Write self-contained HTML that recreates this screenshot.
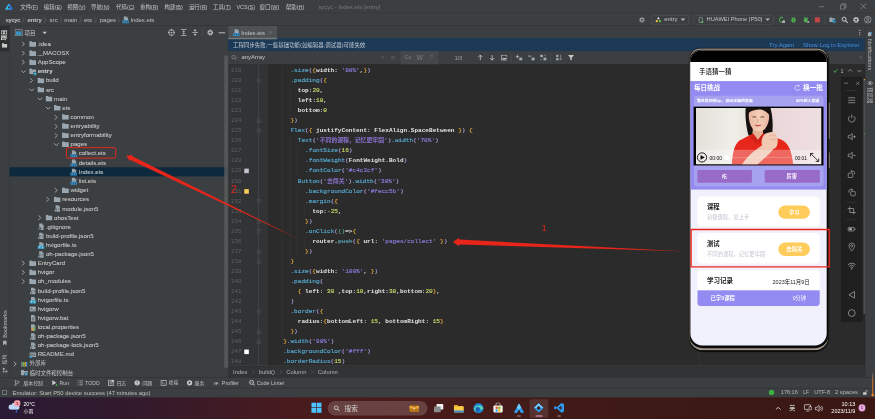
<!DOCTYPE html><html lang="zh"><head><meta charset="utf-8"><title>sycyc - Index.ets [entry]</title><style>
*{box-sizing:border-box;margin:0;padding:0}
html,body{width:875px;height:419px;overflow:hidden;background:#2b2b2b}
body{filter:opacity(1)}
u{text-decoration-thickness:0.7px;text-underline-offset:1.5px}
#root{position:absolute;left:0;top:0;width:1920px;height:920px;transform:scale(0.455729);transform-origin:0 0;
 font-family:"Liberation Sans","Noto Sans CJK SC",sans-serif;font-size:12px;color:#bbbbbb;overflow:hidden;background:#2b2b2b}
.a{position:absolute;white-space:nowrap}
.t{position:absolute;white-space:nowrap;line-height:20px;height:20px}
.mono{font-family:"Liberation Mono","Noto Sans CJK SC",monospace}
.cl{position:absolute;white-space:pre;height:22px;line-height:22px;font-family:"Liberation Mono","Noto Sans CJK SC",monospace;font-size:13.33px;color:#e4e4e4;font-weight:bold}
.cl i{font-style:normal;font-weight:normal;-webkit-text-stroke:0.35px currentColor}
.f{color:#56a8cf}.p{color:#b7a1e0}.b{color:#e0a23a}.s{color:#8d78d8}.n{color:#c3d66a}.o{color:#c8c8c8}
.ln{position:absolute;left:500.5px;width:32px;height:22px;line-height:22px;font-size:12.6px;color:#5f6366;font-family:"Liberation Mono",monospace;text-align:left}
</style></head><body><div id="root">
<div class="a" style="left:0.0px;top:0.0px;width:1920.0px;height:57.1px;background:#3c3f41"></div>
<div class="a" style="left:0.0px;top:56.2px;width:1920.0px;height:1.1px;background:#323232"></div>
<div class="a" style="left:0.0px;top:57.1px;width:501.2px;height:771.3px;background:#3c3f41"></div>
<div class="a" style="left:501.2px;top:57.1px;width:1396.9px;height:29.0px;background:#3c3f41"></div>
<div class="a" style="left:501.2px;top:84.3px;width:1396.9px;height:27.6px;background:#1c3956"></div>
<div class="a" style="left:501.2px;top:111.9px;width:1396.9px;height:29.2px;background:#3c3f41"></div>
<div class="a" style="left:501.2px;top:141.1px;width:1396.9px;height:661.8px;background:#2b2b2b"></div>
<div class="a" style="left:501.2px;top:141.1px;width:86.0px;height:661.8px;background:#313335"></div>
<div class="a" style="left:567.2px;top:141.1px;width:1.1px;height:661.8px;background:#555555"></div>
<div class="a" style="left:586.8px;top:141.1px;width:1.1px;height:661.8px;background:#3a3a3a"></div>
<div class="a" style="left:1533.8px;top:141.1px;width:1.1px;height:661.8px;background:#3e3e3e"></div>
<div class="a" style="left:501.2px;top:802.2px;width:1396.9px;height:1.3px;background:#4a4a4a"></div>
<div class="a" style="left:501.2px;top:803.5px;width:1396.9px;height:25.5px;background:#313335"></div>
<div class="a" style="left:1898.1px;top:57.1px;width:21.9px;height:771.3px;background:#3c3f41"></div>
<div class="a" style="left:1897.6px;top:57.1px;width:0.9px;height:771.3px;background:#323232"></div>
<div class="a" style="left:0.0px;top:828.3px;width:1920.0px;height:23.5px;background:#3c3f41"></div>
<div class="a" style="left:0.0px;top:827.9px;width:1920.0px;height:1.1px;background:#323232"></div>
<div class="a" style="left:0.0px;top:851.8px;width:1920.0px;height:21.1px;background:#3c3f41"></div>
<div class="a" style="left:0.0px;top:851.4px;width:1920.0px;height:1.1px;background:#323232"></div>
<svg class="a" style="left:11.4px;top:7.0px;" width="17.6" height="15.4" viewBox="0 0 16 14"><defs><linearGradient id="lg1" x1="0" y1="0" x2="1" y2="0"><stop offset="0" stop-color="#3fd0f0"/><stop offset="1" stop-color="#1f6ff0"/></linearGradient></defs><path d="M8 2.600L13.800 11.600H2.200z" fill="none" stroke="url(#lg1)" stroke-width="2.800" stroke-linejoin="round"/></svg>
<div class="a" style="left:0.0px;top:28.3px;width:1920.0px;height:1.0px;background:#333536"></div>
<div class="t" style="left:44.3px;top:4.5px;height:20px;line-height:20px;color:#c4c4c4;font-size:12px">文件(<u>F</u>)</div>
<div class="t" style="left:95.9px;top:4.5px;height:20px;line-height:20px;color:#c4c4c4;font-size:12px">编辑(<u>E</u>)</div>
<div class="t" style="left:147.5px;top:4.5px;height:20px;line-height:20px;color:#c4c4c4;font-size:12px">视图(<u>V</u>)</div>
<div class="t" style="left:199.5px;top:4.5px;height:20px;line-height:20px;color:#c4c4c4;font-size:12px">导航(<u>N</u>)</div>
<div class="t" style="left:254.8px;top:4.5px;height:20px;line-height:20px;color:#c4c4c4;font-size:12px">代码(<u>C</u>)</div>
<div class="t" style="left:307.0px;top:4.5px;height:20px;line-height:20px;color:#c4c4c4;font-size:12px">重构(<u>R</u>)</div>
<div class="t" style="left:361.2px;top:4.5px;height:20px;line-height:20px;color:#c4c4c4;font-size:12px">构建(<u>B</u>)</div>
<div class="t" style="left:414.5px;top:4.5px;height:20px;line-height:20px;color:#c4c4c4;font-size:12px">运行(<u>R</u>)</div>
<div class="t" style="left:467.2px;top:4.5px;height:20px;line-height:20px;color:#c4c4c4;font-size:12px">工具(<u>T</u>)</div>
<div class="t" style="left:518.9px;top:4.5px;height:20px;line-height:20px;color:#c4c4c4;font-size:12px">VCS(<u>S</u>)</div>
<div class="t" style="left:569.4px;top:4.5px;height:20px;line-height:20px;color:#c4c4c4;font-size:12px">窗口(<u>W</u>)</div>
<div class="t" style="left:626.9px;top:4.5px;height:20px;line-height:20px;color:#c4c4c4;font-size:12px">帮助(<u>H</u>)</div>
<div class="t" style="left:698.7px;top:4.5px;height:20px;line-height:20px;color:#787878;font-size:12.95px">sycyc - Index.ets [entry]</div>
<svg class="a" style="left:1792.7px;top:4.4px;" width="19.7" height="19.7" viewBox="0 0 10 10"><path d="M2 5.5H8" stroke="#a0a0a0" stroke-width="0.6"/></svg>
<svg class="a" style="left:1839.9px;top:3.9px;" width="19.7" height="19.7" viewBox="0 0 10 10"><path d="M2.2 3.6h4.6v4.6H2.2z M3.6 3.6V2.2h4.6v4.6H6.8" fill="none" stroke="#a0a0a0" stroke-width="0.6"/></svg>
<svg class="a" style="left:1885.3px;top:3.5px;" width="19.7" height="19.7" viewBox="0 0 10 10"><path d="M2 2L8 8M8 2L2 8" stroke="#a8a8a8" stroke-width="0.6"/></svg>
<div class="t" style="left:12.1px;top:34.1px;height:20px;line-height:20px;font-size:13.2px;color:#c0c0c0;font-weight:bold;;letter-spacing:-0.88px">sycyc</div>
<div class="t" style="left:60.1px;top:34.1px;height:20px;line-height:20px;font-size:13.2px;color:#c0c0c0;font-weight:bold;;letter-spacing:-0.14px">entry</div>
<div class="t" style="left:108.4px;top:34.1px;height:20px;line-height:20px;font-size:13.2px;color:#c0c0c0;;letter-spacing:0.43px">src</div>
<div class="t" style="left:141.1px;top:34.1px;height:20px;line-height:20px;font-size:13.2px;color:#c0c0c0;;letter-spacing:-0.19px">main</div>
<div class="t" style="left:184.3px;top:34.1px;height:20px;line-height:20px;font-size:13.2px;color:#c0c0c0;;letter-spacing:-0.01px">ets</div>
<div class="t" style="left:219.0px;top:34.1px;height:20px;line-height:20px;font-size:13.2px;color:#c0c0c0;;letter-spacing:-0.08px">pages</div>
<svg class="a" style="left:47.0px;top:35.5px;" width="7.0" height="15.4" viewBox="0 0 6 16"><path d="M1 0.5L5 8L1 15.5" fill="none" stroke="#6e6e6e" stroke-width="1"/></svg>
<svg class="a" style="left:95.2px;top:35.5px;" width="7.0" height="15.4" viewBox="0 0 6 16"><path d="M1 0.5L5 8L1 15.5" fill="none" stroke="#6e6e6e" stroke-width="1"/></svg>
<svg class="a" style="left:130.3px;top:35.5px;" width="7.0" height="15.4" viewBox="0 0 6 16"><path d="M1 0.5L5 8L1 15.5" fill="none" stroke="#6e6e6e" stroke-width="1"/></svg>
<svg class="a" style="left:172.7px;top:35.5px;" width="7.0" height="15.4" viewBox="0 0 6 16"><path d="M1 0.5L5 8L1 15.5" fill="none" stroke="#6e6e6e" stroke-width="1"/></svg>
<svg class="a" style="left:206.3px;top:35.5px;" width="7.0" height="15.4" viewBox="0 0 6 16"><path d="M1 0.5L5 8L1 15.5" fill="none" stroke="#6e6e6e" stroke-width="1"/></svg>
<svg class="a" style="left:257.0px;top:35.5px;" width="7.0" height="15.4" viewBox="0 0 6 16"><path d="M1 0.5L5 8L1 15.5" fill="none" stroke="#6e6e6e" stroke-width="1"/></svg>
<svg class="a" style="left:267.3px;top:34.5px;" width="16.7" height="17.1" viewBox="0 0 16 16"><path d="M4.5 1h6l3 3v5h-9z" fill="#9aa7b0"/><path d="M10.5 1l3 3h-3z" fill="#5e6a72"/><rect x="1.5" y="9.2" width="13.5" height="6" fill="#3d9bd6"/><rect x="3" y="10.8" width="2.4" height="2.8" fill="#1d4f74"/><rect x="7" y="10.8" width="2.4" height="2.8" fill="#1d4f74"/><rect x="11" y="10.8" width="2.4" height="2.8" fill="#1d4f74"/></svg>
<div class="t" style="left:286.1px;top:34.1px;height:20px;line-height:20px;font-size:13.2px;color:#c0c0c0;letter-spacing:-0.12px">Index.ets</div>
<svg class="a" style="left:1401.3px;top:35.5px;" width="15.4" height="15.4" viewBox="0 0 16 16"><circle cx="8" cy="8" r="4.6" fill="none" stroke="#afb1b3" stroke-width="2.6" stroke-dasharray="2.4 1.2"/><circle cx="8" cy="8" r="3.4" fill="none" stroke="#afb1b3" stroke-width="1.6"/></svg>
<div class="a" style="left:1429.1px;top:32.5px;width:83.2px;height:21.9px;border:1px solid #5a5d5f;border-radius:4px;background:#3c3f41"></div>
<svg class="a" style="left:1437.3px;top:35.1px;" width="15.4" height="16.2" viewBox="0 0 16 16"><path d="M8 1.5l3.2 5.5H4.8z" fill="#e8e8e8"/><circle cx="4.4" cy="11.6" r="2.6" fill="#f2c037"/><rect x="9.2" y="9" width="5" height="5" fill="#62b543"/></svg>
<div class="t" style="left:1457.4px;top:33.2px;height:20px;line-height:20px;font-size:13.24px;color:#c4c4c4">entry</div>
<svg class="a" style="left:1492.8px;top:40.2px;" width="11.0" height="6.6" viewBox="0 0 10 6"><path d="M0 0h10L5 5.5z" fill="#b4b4b4"/></svg>
<div class="a" style="left:1522.2px;top:32.5px;width:175.8px;height:21.9px;border:1px solid #5a5d5f;border-radius:4px;background:#3c3f41"></div>
<svg class="a" style="left:1530.7px;top:34.7px;" width="14.0" height="17.6" viewBox="0 0 16 16"><rect x="3.5" y="1.5" width="8" height="13" rx="1.3" fill="none" stroke="#afb1b3" stroke-width="1.4"/><circle cx="11.8" cy="13" r="2.6" fill="#4fc24f"/></svg>
<div class="t" style="left:1550.5px;top:33.2px;height:20px;line-height:20px;font-size:12.53px;color:#c4c4c4">HUAWEI Phone [P50]</div>
<svg class="a" style="left:1679.1px;top:40.2px;" width="11.0" height="6.6" viewBox="0 0 10 6"><path d="M0 0h10L5 5.5z" fill="#b4b4b4"/></svg>
<svg class="a" style="left:1707.2px;top:35.1px;" width="16.7" height="16.7" viewBox="0 0 16 16"><path d="M13 8.5A5 5 0 1 1 8 3.2" fill="none" stroke="#4fb04f" stroke-width="2"/><path d="M7.4 0.4L11.4 3.2L7.4 6z" fill="#4fb04f"/><rect x="9.400" y="9.600" width="5.200" height="5.200" fill="#b4b8ba"/></svg>
<svg class="a" style="left:1733.3px;top:35.1px;" width="16.2" height="16.7" viewBox="0 0 16 16"><ellipse cx="8" cy="9.200" rx="4.600" ry="5.400" fill="#4fb04f"/><path d="M4.600 2.400L6.500 5M11.400 2.400L9.500 5" stroke="#4fb04f" stroke-width="1.600"/><path d="M8 6v7" stroke="#2f7a32" stroke-width="1.400"/></svg>
<svg class="a" style="left:1760.5px;top:35.1px;" width="16.7" height="16.7" viewBox="0 0 16 16"><ellipse cx="7" cy="8.800" rx="4.400" ry="5.200" fill="#4fb04f"/><path d="M3.600 2.400L5.500 5M10.400 2.400L8.500 5" stroke="#4fb04f" stroke-width="1.600"/><rect x="9.200" y="9.600" width="6" height="5.600" fill="#3c3f41"/><path d="M10.400 10.200l4.600 2.600-4.600 2.600z" fill="#c8c8c8"/></svg>
<div class="a" style="left:1787.9px;top:37.7px;width:11.0px;height:11.0px;background:#c74446"></div>
<div class="a" style="left:1810.3px;top:33.8px;width:1.1px;height:18.9px;background:#555"></div>
<svg class="a" style="left:1818.6px;top:35.1px;" width="16.2" height="16.7" viewBox="0 0 16 16"><path d="M1 3h5l1.4 1.8H13V13H1z" fill="#9aa7b0"/><rect x="8" y="7.6" width="7" height="7" fill="#3592c4"/><path d="M9.5 9h4v4" stroke="#25323a" fill="none" stroke-width="1.2"/></svg>
<svg class="a" style="left:1844.5px;top:34.7px;" width="17.1" height="17.1" viewBox="0 0 16 16"><circle cx="6.6" cy="6.6" r="4.1" fill="none" stroke="#d0d0d0" stroke-width="2"/><path d="M9.6 9.6L14 14" stroke="#d0d0d0" stroke-width="2.2"/></svg>
<svg class="a" style="left:1870.4px;top:34.7px;" width="17.1" height="17.1" viewBox="0 0 16 16"><circle cx="8" cy="8" r="4.7" fill="none" stroke="#d0d0d0" stroke-width="2.8" stroke-dasharray="2.3 1.4"/><circle cx="8" cy="8" r="3.3" fill="none" stroke="#d0d0d0" stroke-width="2"/></svg>
<svg class="a" style="left:1895.0px;top:34.2px;" width="18.4" height="18.4" viewBox="0 0 16 16"><circle cx="8" cy="8" r="6.4" fill="none" stroke="#afb1b3" stroke-width="1.2"/><circle cx="8" cy="6.3" r="2.3" fill="none" stroke="#afb1b3" stroke-width="1.2"/><path d="M3.6 12.6c1-2.6 7.8-2.6 8.8 0" fill="none" stroke="#afb1b3" stroke-width="1.2"/></svg>
<div class="a" style="left:0.0px;top:57.1px;width:20.6px;height:56.2px;background:#2d2f30"></div>
<div class="a" style="left:20.4px;top:57.1px;width:0.9px;height:771.3px;background:#323232"></div>
<div class="a" style="left:10.3px;top:76.6px;width:0;height:0;"><div class="vt" style="position:absolute;white-space:nowrap;transform:translate(-50%,-50%) rotate(-90deg);line-height:14px;font-size:11.5px;color:#e0e0e0;font-weight:bold">项目</div></div>
<svg class="a" style="left:4.2px;top:93.5px;" width="12.3" height="11.0" viewBox="0 0 14 12"><path d="M0 1h5l1.4 1.6H14V12H0z" fill="#c8c8c8"/></svg>
<div class="a" style="left:10.8px;top:711.1px;width:0;height:0;"><div class="vt" style="position:absolute;white-space:nowrap;transform:translate(-50%,-50%) rotate(-90deg);line-height:14px;font-size:11.99px;color:#bbbbbb">Bookmarks</div></div>
<svg class="a" style="left:5.3px;top:746.1px;" width="11.0" height="13.2" viewBox="0 0 12 13"><path d="M2 1h8v11l-4-3-4 3z" fill="#afb1b3"/></svg>
<div class="a" style="left:10.8px;top:788.8px;width:0;height:0;"><div class="vt" style="position:absolute;white-space:nowrap;transform:translate(-50%,-50%) rotate(-90deg);line-height:14px;font-size:10.4px;color:#bbbbbb">结构</div></div>
<svg class="a" style="left:4.8px;top:806.2px;" width="12.3" height="12.3" viewBox="0 0 12 12"><rect x="1" y="1" width="4" height="4" fill="#afb1b3"/><rect x="7" y="7" width="4" height="4" fill="#afb1b3"/><rect x="1" y="8" width="3" height="3" fill="#afb1b3"/><path d="M3 5v4.5h4" stroke="#afb1b3" fill="none"/></svg>
<svg class="a" style="left:32.0px;top:64.1px;" width="17.6" height="15.4" viewBox="0 0 16 14"><rect x="0.700" y="0.700" width="14.600" height="12.600" fill="#45494b" stroke="#9aa7b0" stroke-width="1.400"/><rect x="2.600" y="4.400" width="10.800" height="7.200" fill="#3592c4"/></svg>
<div class="t" style="left:53.8px;top:61.8px;height:20px;line-height:20px;font-size:12px;color:#c4c4c4">项目</div>
<svg class="a" style="left:93.0px;top:69.3px;" width="10.1" height="6.1" viewBox="0 0 10 6"><path d="M0 0h10L5 6z" fill="#c4c4c4"/></svg>
<svg class="a" style="left:367.8px;top:63.4px;" width="16.7" height="16.7" viewBox="0 0 16 16"><circle cx="8" cy="8" r="6" fill="none" stroke="#c8c8c8" stroke-width="1.5"/><circle cx="8" cy="8" r="1.8" fill="#c8c8c8"/><path d="M8 0.5V4.5M8 11.5V15.5M0.5 8H4.5M11.5 8H15.5" stroke="#c8c8c8" stroke-width="1.5"/></svg>
<svg class="a" style="left:394.5px;top:63.4px;" width="16.2" height="16.7" viewBox="0 0 16 16"><path d="M2 1.5H14M2 14.5H14" stroke="#c8c8c8" stroke-width="1.5"/><path d="M8 3.2L11 6.6H5zM8 12.8L11 9.4H5z" fill="#c8c8c8"/><path d="M8 6V10" stroke="#c8c8c8" stroke-width="1.4"/></svg>
<svg class="a" style="left:420.0px;top:63.4px;" width="16.2" height="16.7" viewBox="0 0 16 16"><path d="M2 8H14" stroke="#c8c8c8" stroke-width="1.5"/><path d="M8 6.2L11 2.6H5zM8 9.8L11 13.4H5z" fill="#c8c8c8"/><path d="M8 0.5V3M8 13V15.5" stroke="#c8c8c8" stroke-width="1.4"/></svg>
<div class="a" style="left:443.9px;top:62.8px;width:1.1px;height:18.4px;background:#5a5a5a"></div>
<svg class="a" style="left:452.5px;top:63.4px;" width="16.7" height="16.7" viewBox="0 0 16 16"><circle cx="8" cy="8" r="4.7" fill="none" stroke="#c8c8c8" stroke-width="2.8" stroke-dasharray="2.3 1.4"/><circle cx="8" cy="8" r="3.3" fill="none" stroke="#c8c8c8" stroke-width="2"/></svg>
<div class="a" style="left:480.1px;top:71.1px;width:13.6px;height:1.5px;background:#c8c8c8"></div>
<div class="a" style="left:21.1px;top:367.4px;width:480.1px;height:20.1px;background:#0d293e"></div>
<svg class="a" style="left:47.2px;top:90.1px;" width="8.3" height="13.2" viewBox="0 0 9 14"><path d="M1.5 1.5L7 7L1.5 12.5" fill="none" stroke="#b6b8ba" stroke-width="2"/></svg>
<svg class="a" style="left:64.1px;top:89.9px;" width="15.4" height="13.2" viewBox="0 0 16 14"><path d="M0 0.5h5.4l1.6 2H16V13.5H0z" fill="#9aa7b0"/></svg>
<div class="t" style="left:82.7px;top:86.7px;height:20px;line-height:20px;font-size:13.35px;color:#c6c6c6;-webkit-text-stroke:0.2px #c6c6c6;">.idea</div>
<svg class="a" style="left:47.2px;top:110.1px;" width="8.3" height="13.2" viewBox="0 0 9 14"><path d="M1.5 1.5L7 7L1.5 12.5" fill="none" stroke="#b6b8ba" stroke-width="2"/></svg>
<svg class="a" style="left:64.1px;top:109.9px;" width="15.4" height="13.2" viewBox="0 0 16 14"><path d="M0 0.5h5.4l1.6 2H16V13.5H0z" fill="#9aa7b0"/></svg>
<div class="t" style="left:82.7px;top:106.7px;height:20px;line-height:20px;font-size:13.35px;color:#c6c6c6;-webkit-text-stroke:0.2px #c6c6c6;"><span style="letter-spacing:-1.6px">__</span>MACOSX</div>
<svg class="a" style="left:47.2px;top:130.2px;" width="8.3" height="13.2" viewBox="0 0 9 14"><path d="M1.5 1.5L7 7L1.5 12.5" fill="none" stroke="#b6b8ba" stroke-width="2"/></svg>
<svg class="a" style="left:64.1px;top:130.0px;" width="15.4" height="13.2" viewBox="0 0 16 14"><path d="M0 0.5h5.4l1.6 2H16V13.5H0z" fill="#9aa7b0"/></svg>
<div class="t" style="left:82.7px;top:126.8px;height:20px;line-height:20px;font-size:13.35px;color:#c6c6c6;-webkit-text-stroke:0.2px #c6c6c6;">AppScope</div>
<svg class="a" style="left:44.5px;top:152.9px;" width="13.2" height="8.3" viewBox="0 0 14 9"><path d="M1.5 1.5L7 7L12.5 1.5" fill="none" stroke="#b6b8ba" stroke-width="2"/></svg>
<svg class="a" style="left:64.1px;top:150.0px;" width="15.4" height="13.2" viewBox="0 0 16 14"><path d="M0 0.5h5.4l1.6 2H16V13.5H0z" fill="#9aa7b0"/></svg>
<div class="a" style="left:72.9px;top:158.1px;width:7.0px;height:7.0px;background:#40b6e0;border:0.6px solid #3c3f41"></div>
<div class="t" style="left:82.7px;top:146.8px;height:20px;line-height:20px;font-size:13.35px;color:#c6c6c6;-webkit-text-stroke:0.2px #c6c6c6;font-weight:bold;color:#d0d0d0;">entry</div>
<svg class="a" style="left:65.2px;top:170.3px;" width="8.3" height="13.2" viewBox="0 0 9 14"><path d="M1.5 1.5L7 7L1.5 12.5" fill="none" stroke="#b6b8ba" stroke-width="2"/></svg>
<svg class="a" style="left:82.1px;top:170.1px;" width="15.4" height="13.2" viewBox="0 0 16 14"><path d="M0 0.5h5.4l1.6 2H16V13.5H0z" fill="#9aa7b0"/></svg>
<div class="t" style="left:100.7px;top:166.9px;height:20px;line-height:20px;font-size:13.35px;color:#c6c6c6;-webkit-text-stroke:0.2px #c6c6c6;">build</div>
<svg class="a" style="left:62.5px;top:193.0px;" width="13.2" height="8.3" viewBox="0 0 14 9"><path d="M1.5 1.5L7 7L12.5 1.5" fill="none" stroke="#b6b8ba" stroke-width="2"/></svg>
<svg class="a" style="left:82.1px;top:190.1px;" width="15.4" height="13.2" viewBox="0 0 16 14"><path d="M0 0.5h5.4l1.6 2H16V13.5H0z" fill="#9aa7b0"/></svg>
<div class="t" style="left:100.7px;top:186.9px;height:20px;line-height:20px;font-size:13.35px;color:#c6c6c6;-webkit-text-stroke:0.2px #c6c6c6;">src</div>
<svg class="a" style="left:80.5px;top:213.0px;" width="13.2" height="8.3" viewBox="0 0 14 9"><path d="M1.5 1.5L7 7L12.5 1.5" fill="none" stroke="#b6b8ba" stroke-width="2"/></svg>
<svg class="a" style="left:100.1px;top:210.2px;" width="15.4" height="13.2" viewBox="0 0 16 14"><path d="M0 0.5h5.4l1.6 2H16V13.5H0z" fill="#9aa7b0"/></svg>
<div class="t" style="left:118.7px;top:207.0px;height:20px;line-height:20px;font-size:13.35px;color:#c6c6c6;-webkit-text-stroke:0.2px #c6c6c6;">main</div>
<svg class="a" style="left:98.5px;top:233.1px;" width="13.2" height="8.3" viewBox="0 0 14 9"><path d="M1.5 1.5L7 7L12.5 1.5" fill="none" stroke="#b6b8ba" stroke-width="2"/></svg>
<svg class="a" style="left:118.1px;top:230.2px;" width="15.4" height="13.2" viewBox="0 0 16 14"><path d="M0 0.5h5.4l1.6 2H16V13.5H0z" fill="#9aa7b0"/></svg>
<div class="t" style="left:136.7px;top:227.0px;height:20px;line-height:20px;font-size:13.35px;color:#c6c6c6;-webkit-text-stroke:0.2px #c6c6c6;">ets</div>
<svg class="a" style="left:119.1px;top:250.5px;" width="8.3" height="13.2" viewBox="0 0 9 14"><path d="M1.5 1.5L7 7L1.5 12.5" fill="none" stroke="#b6b8ba" stroke-width="2"/></svg>
<svg class="a" style="left:136.0px;top:250.3px;" width="15.4" height="13.2" viewBox="0 0 16 14"><path d="M0 0.5h5.4l1.6 2H16V13.5H0z" fill="#9aa7b0"/></svg>
<div class="t" style="left:154.7px;top:247.1px;height:20px;line-height:20px;font-size:13.35px;color:#c6c6c6;-webkit-text-stroke:0.2px #c6c6c6;">common</div>
<svg class="a" style="left:119.1px;top:270.5px;" width="8.3" height="13.2" viewBox="0 0 9 14"><path d="M1.5 1.5L7 7L1.5 12.5" fill="none" stroke="#b6b8ba" stroke-width="2"/></svg>
<svg class="a" style="left:136.0px;top:270.3px;" width="15.4" height="13.2" viewBox="0 0 16 14"><path d="M0 0.5h5.4l1.6 2H16V13.5H0z" fill="#9aa7b0"/></svg>
<div class="t" style="left:154.7px;top:267.1px;height:20px;line-height:20px;font-size:13.35px;color:#c6c6c6;-webkit-text-stroke:0.2px #c6c6c6;">entryability</div>
<svg class="a" style="left:119.1px;top:290.6px;" width="8.3" height="13.2" viewBox="0 0 9 14"><path d="M1.5 1.5L7 7L1.5 12.5" fill="none" stroke="#b6b8ba" stroke-width="2"/></svg>
<svg class="a" style="left:136.0px;top:290.4px;" width="15.4" height="13.2" viewBox="0 0 16 14"><path d="M0 0.5h5.4l1.6 2H16V13.5H0z" fill="#9aa7b0"/></svg>
<div class="t" style="left:154.7px;top:287.2px;height:20px;line-height:20px;font-size:13.35px;color:#c6c6c6;-webkit-text-stroke:0.2px #c6c6c6;">entryformability</div>
<svg class="a" style="left:116.5px;top:313.3px;" width="13.2" height="8.3" viewBox="0 0 14 9"><path d="M1.5 1.5L7 7L12.5 1.5" fill="none" stroke="#b6b8ba" stroke-width="2"/></svg>
<svg class="a" style="left:136.0px;top:310.4px;" width="15.4" height="13.2" viewBox="0 0 16 14"><path d="M0 0.5h5.4l1.6 2H16V13.5H0z" fill="#9aa7b0"/></svg>
<div class="t" style="left:154.7px;top:307.2px;height:20px;line-height:20px;font-size:13.35px;color:#c6c6c6;-webkit-text-stroke:0.2px #c6c6c6;">pages</div>
<svg class="a" style="left:153.2px;top:328.7px;" width="16.7" height="17.1" viewBox="0 0 16 16"><path d="M4.5 1h6l3 3v5h-9z" fill="#9aa7b0"/><path d="M10.5 1l3 3h-3z" fill="#5e6a72"/><rect x="1.5" y="9.2" width="13.5" height="6" fill="#3d9bd6"/><rect x="3" y="10.8" width="2.4" height="2.8" fill="#1d4f74"/><rect x="7" y="10.8" width="2.4" height="2.8" fill="#1d4f74"/><rect x="11" y="10.8" width="2.4" height="2.8" fill="#1d4f74"/></svg>
<div class="t" style="left:172.7px;top:327.3px;height:20px;line-height:20px;font-size:13.35px;color:#c6c6c6;-webkit-text-stroke:0.2px #c6c6c6;">collect.ets</div>
<svg class="a" style="left:153.2px;top:348.8px;" width="16.7" height="17.1" viewBox="0 0 16 16"><path d="M4.5 1h6l3 3v5h-9z" fill="#9aa7b0"/><path d="M10.5 1l3 3h-3z" fill="#5e6a72"/><rect x="1.5" y="9.2" width="13.5" height="6" fill="#3d9bd6"/><rect x="3" y="10.8" width="2.4" height="2.8" fill="#1d4f74"/><rect x="7" y="10.8" width="2.4" height="2.8" fill="#1d4f74"/><rect x="11" y="10.8" width="2.4" height="2.8" fill="#1d4f74"/></svg>
<div class="t" style="left:172.7px;top:347.3px;height:20px;line-height:20px;font-size:13.35px;color:#c6c6c6;-webkit-text-stroke:0.2px #c6c6c6;">details.ets</div>
<svg class="a" style="left:153.2px;top:368.8px;" width="16.7" height="17.1" viewBox="0 0 16 16"><path d="M4.5 1h6l3 3v5h-9z" fill="#9aa7b0"/><path d="M10.5 1l3 3h-3z" fill="#5e6a72"/><rect x="1.5" y="9.2" width="13.5" height="6" fill="#3d9bd6"/><rect x="3" y="10.8" width="2.4" height="2.8" fill="#1d4f74"/><rect x="7" y="10.8" width="2.4" height="2.8" fill="#1d4f74"/><rect x="11" y="10.8" width="2.4" height="2.8" fill="#1d4f74"/></svg>
<div class="t" style="left:172.7px;top:367.4px;height:20px;line-height:20px;font-size:13.35px;color:#c6c6c6;-webkit-text-stroke:0.2px #c6c6c6;">Index.ets</div>
<svg class="a" style="left:153.2px;top:388.9px;" width="16.7" height="17.1" viewBox="0 0 16 16"><path d="M4.5 1h6l3 3v5h-9z" fill="#9aa7b0"/><path d="M10.5 1l3 3h-3z" fill="#5e6a72"/><rect x="1.5" y="9.2" width="13.5" height="6" fill="#3d9bd6"/><rect x="3" y="10.8" width="2.4" height="2.8" fill="#1d4f74"/><rect x="7" y="10.8" width="2.4" height="2.8" fill="#1d4f74"/><rect x="11" y="10.8" width="2.4" height="2.8" fill="#1d4f74"/></svg>
<div class="t" style="left:172.7px;top:387.4px;height:20px;line-height:20px;font-size:13.35px;color:#c6c6c6;-webkit-text-stroke:0.2px #c6c6c6;">list.ets</div>
<svg class="a" style="left:119.1px;top:410.9px;" width="8.3" height="13.2" viewBox="0 0 9 14"><path d="M1.5 1.5L7 7L1.5 12.5" fill="none" stroke="#b6b8ba" stroke-width="2"/></svg>
<svg class="a" style="left:136.0px;top:410.7px;" width="15.4" height="13.2" viewBox="0 0 16 14"><path d="M0 0.5h5.4l1.6 2H16V13.5H0z" fill="#9aa7b0"/></svg>
<div class="t" style="left:154.7px;top:407.5px;height:20px;line-height:20px;font-size:13.35px;color:#c6c6c6;-webkit-text-stroke:0.2px #c6c6c6;">widget</div>
<svg class="a" style="left:101.2px;top:430.9px;" width="8.3" height="13.2" viewBox="0 0 9 14"><path d="M1.5 1.5L7 7L1.5 12.5" fill="none" stroke="#b6b8ba" stroke-width="2"/></svg>
<svg class="a" style="left:118.1px;top:430.7px;" width="15.4" height="13.2" viewBox="0 0 16 14"><path d="M0 0.5h5.4l1.6 2H16V13.5H0z" fill="#9aa7b0"/></svg>
<div class="t" style="left:136.7px;top:427.5px;height:20px;line-height:20px;font-size:13.35px;color:#c6c6c6;-webkit-text-stroke:0.2px #c6c6c6;">resources</div>
<svg class="a" style="left:117.6px;top:449.2px;" width="16.2" height="17.1" viewBox="0 0 16 16"><path d="M4 1h6.5l3 3v11H4z" fill="#9aa7b0"/><path d="M10.5 1l3 3h-3z" fill="#5e6a72"/><path d="M7.4 6.4c-1.4 0-.6 2.6-1.8 2.6 1.2 0 .4 2.6 1.8 2.6M10.2 6.4c1.4 0 .6 2.6 1.8 2.6-1.2 0-.4 2.6-1.8 2.6" fill="none" stroke="#3c3f41" stroke-width="1"/><rect x="1.4" y="9.6" width="4.2" height="5.4" fill="#3c3f41"/><rect x="2" y="10.2" width="3" height="4.2" fill="#9aa7b0"/></svg>
<div class="t" style="left:136.7px;top:447.6px;height:20px;line-height:20px;font-size:13.35px;color:#c6c6c6;-webkit-text-stroke:0.2px #c6c6c6;">module.json5</div>
<svg class="a" style="left:83.2px;top:471.1px;" width="8.3" height="13.2" viewBox="0 0 9 14"><path d="M1.5 1.5L7 7L1.5 12.5" fill="none" stroke="#b6b8ba" stroke-width="2"/></svg>
<svg class="a" style="left:100.1px;top:470.8px;" width="15.4" height="13.2" viewBox="0 0 16 14"><path d="M0 0.5h5.4l1.6 2H16V13.5H0z" fill="#9aa7b0"/></svg>
<div class="t" style="left:118.7px;top:467.6px;height:20px;line-height:20px;font-size:13.35px;color:#c6c6c6;-webkit-text-stroke:0.2px #c6c6c6;">ohosTest</div>
<svg class="a" style="left:81.6px;top:489.3px;" width="16.2" height="17.1" viewBox="0 0 16 16"><path d="M4 1h6.5l3 3v11H4z" fill="#9aa7b0"/><path d="M10.5 1l3 3h-3z" fill="#5e6a72"/><circle cx="5" cy="11.6" r="3.6" fill="#3c3f41"/><circle cx="5" cy="11.6" r="2.6" fill="none" stroke="#9aa7b0" stroke-width="1"/><path d="M3.2 13.4l3.6-3.6" stroke="#9aa7b0"/></svg>
<div class="t" style="left:100.7px;top:487.7px;height:20px;line-height:20px;font-size:13.35px;color:#c6c6c6;-webkit-text-stroke:0.2px #c6c6c6;">.gitignore</div>
<svg class="a" style="left:81.6px;top:509.4px;" width="16.2" height="17.1" viewBox="0 0 16 16"><path d="M4 1h6.5l3 3v11H4z" fill="#9aa7b0"/><path d="M10.5 1l3 3h-3z" fill="#5e6a72"/><path d="M7.4 6.4c-1.4 0-.6 2.6-1.8 2.6 1.2 0 .4 2.6 1.8 2.6M10.2 6.4c1.4 0 .6 2.6 1.8 2.6-1.2 0-.4 2.6-1.8 2.6" fill="none" stroke="#3c3f41" stroke-width="1"/><rect x="1.4" y="9.6" width="4.2" height="5.4" fill="#3c3f41"/><rect x="2" y="10.2" width="3" height="4.2" fill="#9aa7b0"/></svg>
<div class="t" style="left:100.7px;top:507.7px;height:20px;line-height:20px;font-size:13.35px;color:#c6c6c6;-webkit-text-stroke:0.2px #c6c6c6;">build-profile.json5</div>
<svg class="a" style="left:81.6px;top:529.5px;" width="16.2" height="17.1" viewBox="0 0 16 16"><path d="M4 1h6.5l3 3v6H4z" fill="#9aa7b0"/><path d="M10.5 1l3 3h-3z" fill="#5e6a72"/><rect x="0.600" y="8.600" width="14.800" height="6.800" fill="#2f9fc6"/><path d="M3 10.6h4M5 10.6v4M11.8 10.8c-2.6-.6-2.6 1.6-.8 1.8 1.6.2 1.4 2.2-1.2 1.6" stroke="#e8f2fa" stroke-width="1" fill="none"/></svg>
<div class="t" style="left:100.7px;top:527.8px;height:20px;line-height:20px;font-size:13.35px;color:#c6c6c6;-webkit-text-stroke:0.2px #c6c6c6;">hvigorfile.ts</div>
<svg class="a" style="left:81.6px;top:549.5px;" width="16.2" height="17.1" viewBox="0 0 16 16"><path d="M4 1h6.5l3 3v11H4z" fill="#9aa7b0"/><path d="M10.5 1l3 3h-3z" fill="#5e6a72"/><path d="M7.4 6.4c-1.4 0-.6 2.6-1.8 2.6 1.2 0 .4 2.6 1.8 2.6M10.2 6.4c1.4 0 .6 2.6 1.8 2.6-1.2 0-.4 2.6-1.8 2.6" fill="none" stroke="#3c3f41" stroke-width="1"/><rect x="1.4" y="9.6" width="4.2" height="5.4" fill="#3c3f41"/><rect x="2" y="10.2" width="3" height="4.2" fill="#9aa7b0"/></svg>
<div class="t" style="left:100.7px;top:547.8px;height:20px;line-height:20px;font-size:13.35px;color:#c6c6c6;-webkit-text-stroke:0.2px #c6c6c6;">oh-package.json5</div>
<svg class="a" style="left:47.2px;top:571.3px;" width="8.3" height="13.2" viewBox="0 0 9 14"><path d="M1.5 1.5L7 7L1.5 12.5" fill="none" stroke="#b6b8ba" stroke-width="2"/></svg>
<svg class="a" style="left:64.1px;top:571.1px;" width="15.4" height="13.2" viewBox="0 0 16 14"><path d="M0 0.5h5.4l1.6 2H16V13.5H0z" fill="#9aa7b0"/></svg>
<div class="t" style="left:82.7px;top:567.9px;height:20px;line-height:20px;font-size:13.35px;color:#c6c6c6;-webkit-text-stroke:0.2px #c6c6c6;">EntryCard</div>
<svg class="a" style="left:47.2px;top:591.4px;" width="8.3" height="13.2" viewBox="0 0 9 14"><path d="M1.5 1.5L7 7L1.5 12.5" fill="none" stroke="#b6b8ba" stroke-width="2"/></svg>
<svg class="a" style="left:64.1px;top:591.1px;" width="15.4" height="13.2" viewBox="0 0 16 14"><path d="M0 0.5h5.4l1.6 2H16V13.5H0z" fill="#9aa7b0"/></svg>
<div class="t" style="left:82.7px;top:587.9px;height:20px;line-height:20px;font-size:13.35px;color:#c6c6c6;-webkit-text-stroke:0.2px #c6c6c6;">hvigor</div>
<svg class="a" style="left:47.2px;top:611.4px;" width="8.3" height="13.2" viewBox="0 0 9 14"><path d="M1.5 1.5L7 7L1.5 12.5" fill="none" stroke="#b6b8ba" stroke-width="2"/></svg>
<svg class="a" style="left:64.1px;top:611.2px;" width="15.4" height="13.2" viewBox="0 0 16 14"><path d="M0 0.5h5.4l1.6 2H16V13.5H0z" fill="#9aa7b0"/></svg>
<div class="t" style="left:82.7px;top:608.0px;height:20px;line-height:20px;font-size:13.35px;color:#c6c6c6;-webkit-text-stroke:0.2px #c6c6c6;">oh_modules</div>
<svg class="a" style="left:63.6px;top:629.7px;" width="16.2" height="17.1" viewBox="0 0 16 16"><path d="M4 1h6.5l3 3v11H4z" fill="#9aa7b0"/><path d="M10.5 1l3 3h-3z" fill="#5e6a72"/><path d="M7.4 6.4c-1.4 0-.6 2.6-1.8 2.6 1.2 0 .4 2.6 1.8 2.6M10.2 6.4c1.4 0 .6 2.6 1.8 2.6-1.2 0-.4 2.6-1.8 2.6" fill="none" stroke="#3c3f41" stroke-width="1"/><rect x="1.4" y="9.6" width="4.2" height="5.4" fill="#3c3f41"/><rect x="2" y="10.2" width="3" height="4.2" fill="#9aa7b0"/></svg>
<div class="t" style="left:82.7px;top:628.0px;height:20px;line-height:20px;font-size:13.35px;color:#c6c6c6;-webkit-text-stroke:0.2px #c6c6c6;">build-profile.json5</div>
<svg class="a" style="left:63.6px;top:649.8px;" width="16.2" height="17.1" viewBox="0 0 16 16"><path d="M4 1h6.5l3 3v6H4z" fill="#9aa7b0"/><path d="M10.5 1l3 3h-3z" fill="#5e6a72"/><rect x="0.600" y="8.600" width="14.800" height="6.800" fill="#2f9fc6"/><path d="M3 10.6h4M5 10.6v4M11.8 10.8c-2.6-.6-2.6 1.6-.8 1.8 1.6.2 1.4 2.2-1.2 1.6" stroke="#e8f2fa" stroke-width="1" fill="none"/></svg>
<div class="t" style="left:82.7px;top:648.1px;height:20px;line-height:20px;font-size:13.35px;color:#c6c6c6;-webkit-text-stroke:0.2px #c6c6c6;">hvigorfile.ts</div>
<svg class="a" style="left:64.1px;top:671.1px;" width="15.4" height="14.0" viewBox="0 0 16 14"><rect x="1" y="1.5" width="14" height="11" fill="#9aa7b0"/><path d="M4 4.5l3 2.5-3 2.5" stroke="#3c3f41" stroke-width="1.4" fill="none"/><path d="M8.5 10h4" stroke="#3c3f41" stroke-width="1.4"/></svg>
<div class="t" style="left:82.7px;top:668.1px;height:20px;line-height:20px;font-size:13.35px;color:#c6c6c6;-webkit-text-stroke:0.2px #c6c6c6;">hvigorw</div>
<svg class="a" style="left:63.6px;top:689.9px;" width="16.2" height="17.1" viewBox="0 0 16 16"><path d="M4 1h6.5l3 3v11H4z" fill="#9aa7b0"/><path d="M10.5 1l3 3h-3z" fill="#5e6a72"/><path d="M6 7h5.5M6 9.4h5.5M6 11.8h4" stroke="#3c3f41" stroke-width="1"/></svg>
<div class="t" style="left:82.7px;top:688.2px;height:20px;line-height:20px;font-size:13.35px;color:#c6c6c6;-webkit-text-stroke:0.2px #c6c6c6;">hvigorw.bat</div>
<svg class="a" style="left:63.6px;top:709.9px;" width="16.2" height="17.1" viewBox="0 0 16 16"><path d="M4 1h6.5l3 3v11H4z" fill="#9aa7b0"/><path d="M10.5 1l3 3h-3z" fill="#5e6a72"/><rect x="4.400" y="11" width="2.400" height="4.600" fill="#e6642c"/><rect x="7" y="9" width="2.400" height="6.600" fill="#f2a33c"/><rect x="9.600" y="6.600" width="2.600" height="9" fill="#62b543"/></svg>
<div class="t" style="left:82.7px;top:708.3px;height:20px;line-height:20px;font-size:13.35px;color:#c6c6c6;-webkit-text-stroke:0.2px #c6c6c6;">local.properties</div>
<svg class="a" style="left:63.6px;top:730.0px;" width="16.2" height="17.1" viewBox="0 0 16 16"><path d="M4 1h6.5l3 3v11H4z" fill="#9aa7b0"/><path d="M10.5 1l3 3h-3z" fill="#5e6a72"/><path d="M7.4 6.4c-1.4 0-.6 2.6-1.8 2.6 1.2 0 .4 2.6 1.8 2.6M10.2 6.4c1.4 0 .6 2.6 1.8 2.6-1.2 0-.4 2.6-1.8 2.6" fill="none" stroke="#3c3f41" stroke-width="1"/><rect x="1.4" y="9.6" width="4.2" height="5.4" fill="#3c3f41"/><rect x="2" y="10.2" width="3" height="4.2" fill="#9aa7b0"/></svg>
<div class="t" style="left:82.7px;top:728.3px;height:20px;line-height:20px;font-size:13.35px;color:#c6c6c6;-webkit-text-stroke:0.2px #c6c6c6;">oh-package.json5</div>
<svg class="a" style="left:63.6px;top:750.0px;" width="16.2" height="17.1" viewBox="0 0 16 16"><path d="M4 1h6.5l3 3v11H4z" fill="#9aa7b0"/><path d="M10.5 1l3 3h-3z" fill="#5e6a72"/><path d="M7.4 6.4c-1.4 0-.6 2.6-1.8 2.6 1.2 0 .4 2.6 1.8 2.6M10.2 6.4c1.4 0 .6 2.6 1.8 2.6-1.2 0-.4 2.6-1.8 2.6" fill="none" stroke="#3c3f41" stroke-width="1"/><rect x="1.4" y="9.6" width="4.2" height="5.4" fill="#3c3f41"/><rect x="2" y="10.2" width="3" height="4.2" fill="#9aa7b0"/></svg>
<div class="t" style="left:82.7px;top:748.4px;height:20px;line-height:20px;font-size:13.35px;color:#c6c6c6;-webkit-text-stroke:0.2px #c6c6c6;">oh-package-lock.json5</div>
<svg class="a" style="left:63.6px;top:770.9px;" width="16.2" height="14.9" viewBox="0 0 16 14"><rect x="0.8" y="2" width="14.4" height="10" rx="1" fill="#9aa7b0"/><path d="M3 9.6V4.8l2 2.4 2-2.4v4.8M11.4 4.6v4.6M9.4 7.4l2 2.2 2-2.2" stroke="#3c3f41" stroke-width="1.2" fill="none"/><rect x="0.8" y="10" width="5" height="4" fill="#3d9bd6"/></svg>
<div class="t" style="left:82.7px;top:768.4px;height:20px;line-height:20px;font-size:13.35px;color:#c6c6c6;-webkit-text-stroke:0.2px #c6c6c6;">README.md</div>
<svg class="a" style="left:29.2px;top:791.9px;" width="8.3" height="13.2" viewBox="0 0 9 14"><path d="M1.5 1.5L7 7L1.5 12.5" fill="none" stroke="#b6b8ba" stroke-width="2"/></svg>
<svg class="a" style="left:45.6px;top:791.0px;" width="16.2" height="14.9" viewBox="0 0 16 14"><rect x="1" y="3" width="2.6" height="10" fill="#9aa7b0"/><rect x="4.4" y="3" width="2.6" height="10" fill="#62b543"/><rect x="7.8" y="3" width="2.6" height="10" fill="#f2c037"/><rect x="11.2" y="3" width="2.6" height="10" fill="#3d9bd6"/></svg>
<div class="t" style="left:64.7px;top:787.8px;height:20px;line-height:20px;font-size:12px;color:#c6c6c6;">外部库</div>
<svg class="a" style="left:45.6px;top:811.0px;" width="16.2" height="14.9" viewBox="0 0 16 14"><path d="M0 0.5h5.4l1.6 2H15V12H0z" fill="#9aa7b0"/><circle cx="11" cy="9.6" r="4" fill="#3c3f41"/><circle cx="11" cy="9.6" r="3" fill="#3d9bd6"/><path d="M11 7.8v2h1.6" stroke="#fff" stroke-width="0.9" fill="none"/></svg>
<div class="t" style="left:64.7px;top:807.8px;height:20px;line-height:20px;font-size:12px;color:#c6c6c6;">临时文件和控制台</div>
<div class="a" style="left:492.0px;top:122.2px;width:9.2px;height:684.6px;background:#595b5d;opacity:0.85"></div>
<div class="a" style="left:145.0px;top:323.0px;width:110.4px;height:25.2px;border:2.9px solid #f0261c;border-radius:4.5px"></div>
<div class="a" style="left:501.2px;top:57.1px;width:106.6px;height:28.5px;background:#4e5254"></div>
<div class="a" style="left:501.2px;top:83.2px;width:106.6px;height:2.9px;background:#767b80"></div>
<svg class="a" style="left:509.5px;top:62.8px;" width="16.7" height="17.1" viewBox="0 0 16 16"><path d="M4.5 1h6l3 3v5h-9z" fill="#9aa7b0"/><path d="M10.5 1l3 3h-3z" fill="#5e6a72"/><rect x="1.5" y="9.2" width="13.5" height="6" fill="#3d9bd6"/><rect x="3" y="10.8" width="2.4" height="2.8" fill="#1d4f74"/><rect x="7" y="10.8" width="2.4" height="2.8" fill="#1d4f74"/><rect x="11" y="10.8" width="2.4" height="2.8" fill="#1d4f74"/></svg>
<div class="t" style="left:529.5px;top:61.5px;height:20px;line-height:20px;font-size:12.76px;color:#c8c8c8">Index.ets</div>
<svg class="a" style="left:588.9px;top:67.1px;" width="8.3" height="8.3" viewBox="0 0 10 10"><path d="M1 1L9 9M9 1L1 9" stroke="#8a8d8f" stroke-width="1.3"/></svg>
<svg class="a" style="left:1883.6px;top:65.0px;" width="5.3" height="13.2" viewBox="0 0 4 15"><circle cx="2" cy="2" r="1.5" fill="#c8c8c8"/><circle cx="2" cy="7.5" r="1.5" fill="#c8c8c8"/><circle cx="2" cy="13" r="1.5" fill="#c8c8c8"/></svg>
<div class="t" style="left:511.3px;top:88.5px;height:20px;line-height:20px;font-size:11.99px;color:#c0c8d0">工程同步失败,一些基础功能(如编辑器,调试器)可能失效.</div>
<div class="t" style="left:1687.4px;top:88.5px;height:20px;line-height:20px;font-size:13.10px;color:#4a8fdc">Try Again</div>
<div class="t" style="left:1762.0px;top:88.5px;height:20px;line-height:20px;font-size:13.05px;color:#4a8fdc">Show Log in Explorer</div>
<svg class="a" style="left:507.3px;top:119.8px;" width="16.2" height="14.0" viewBox="0 0 16 14"><circle cx="5.4" cy="5.4" r="3.8" fill="none" stroke="#9c9ea0" stroke-width="1.3"/><path d="M8.2 8.2L11.6 11.6" stroke="#9c9ea0" stroke-width="1.4"/><path d="M11.4 5.4h3.6l-1.8 2z" fill="#9c9ea0"/></svg>
<div class="t" style="left:530.1px;top:116.4px;height:20px;line-height:20px;font-size:12.79px;color:#c8c8c8">anyArray</div>
<svg class="a" style="left:834.7px;top:122.4px;" width="7.9" height="7.9" viewBox="0 0 10 10"><path d="M1 1L9 9M9 1L1 9" stroke="#6e7072" stroke-width="1.3"/></svg>
<svg class="a" style="left:854.9px;top:120.7px;" width="13.2" height="11.8" viewBox="0 0 14 12"><path d="M2 3h8a2.6 2.6 0 0 1 0 5.2H5.6" fill="none" stroke="#6e7072" stroke-width="1.2"/><path d="M6.6 6L4 8.2l2.6 2.2" fill="none" stroke="#6e7072" stroke-width="1.2"/></svg>
<div class="a" style="left:879.0px;top:111.9px;width:82.7px;height:29.2px;background:#44484a"></div>
<div class="t" style="left:887.4px;top:116.4px;height:20px;line-height:20px;font-size:12.57px;color:#7e8183">Cc</div>
<div class="t" style="left:913.7px;top:116.4px;height:20px;line-height:20px;font-size:14.88px;color:#7e8183">W</div>
<div class="t" style="left:941.3px;top:116.4px;height:20px;line-height:20px;font-size:13.5px;color:#7e8183">.*</div>
<div class="t" style="left:998.0px;top:116.6px;height:20px;line-height:20px;font-size:11.36px;color:#a8a8a8">1/3</div>
<svg class="a" style="left:1046.7px;top:119.4px;" width="14.0" height="14.9" viewBox="0 0 14 15"><path d="M7 13V2M2.2 6.6L7 1.8l4.8 4.8" fill="none" stroke="#d0d0d0" stroke-width="1.7"/></svg>
<svg class="a" style="left:1073.0px;top:119.4px;" width="14.0" height="14.9" viewBox="0 0 14 15"><path d="M7 2v11M2.2 8.4L7 13.2l4.8-4.8" fill="none" stroke="#d0d0d0" stroke-width="1.7"/></svg>
<svg class="a" style="left:1098.5px;top:119.8px;" width="14.5" height="13.6" viewBox="0 0 14 13"><rect x="1" y="1" width="12" height="11" fill="none" stroke="#c8c8c8" stroke-width="1.4"/><rect x="3.4" y="7" width="7.2" height="3.4" fill="#c8c8c8"/></svg>
<div class="a" style="left:1120.8px;top:116.3px;width:1.1px;height:20.6px;background:#555"></div>
<svg class="a" style="left:1130.9px;top:119.4px;" width="15.8" height="14.5" viewBox="0 0 15 14"><path d="M4 1v8M0.5 5h7" stroke="#c8c8c8" stroke-width="1.5"/><rect x="8" y="7" width="6.5" height="6" fill="#9aa7b0"/></svg>
<svg class="a" style="left:1158.1px;top:119.4px;" width="15.8" height="14.5" viewBox="0 0 15 14"><path d="M0.5 4h7" stroke="#c8c8c8" stroke-width="1.5"/><rect x="8" y="7" width="6.5" height="6" fill="#9aa7b0"/></svg>
<svg class="a" style="left:1184.0px;top:119.4px;" width="15.8" height="14.5" viewBox="0 0 15 14"><rect x="1" y="1" width="6" height="5" fill="#9aa7b0"/><rect x="8" y="7" width="6.5" height="6" fill="#9aa7b0"/><path d="M9 2h5M3 9v4" stroke="#9aa7b0" stroke-width="1.2"/></svg>
<div class="a" style="left:1207.7px;top:116.3px;width:1.1px;height:20.6px;background:#555"></div>
<svg class="a" style="left:1218.7px;top:119.4px;" width="14.9" height="14.5" viewBox="0 0 14 14"><rect x="1" y="1" width="5" height="5" fill="#9aa7b0"/><rect x="1" y="8" width="5" height="5" fill="#9aa7b0"/><path d="M10.5 1v11M7.6 9.4l2.9 3 2.9-3" stroke="#9aa7b0" fill="none" stroke-width="1.3"/></svg>
<svg class="a" style="left:1245.5px;top:120.2px;" width="14.0" height="13.2" viewBox="0 0 14 13"><path d="M0.5 0.5h13L8.6 6.6V12.6L5.4 10.8V6.6z" fill="#c8c8c8"/></svg>
<svg class="a" style="left:1884.0px;top:122.4px;" width="8.3" height="8.3" viewBox="0 0 10 10"><path d="M1 1L9 9M9 1L1 9" stroke="#6e7072" stroke-width="1.2"/></svg>
<div class="a" style="left:620.1px;top:144.1px;width:1.1px;height:616.9px;background:#3b3b3b"></div>
<div class="a" style="left:636.3px;top:166.2px;width:1.1px;height:110.2px;background:#3b3b3b"></div>
<div class="a" style="left:636.3px;top:298.3px;width:1.1px;height:286.4px;background:#3b3b3b"></div>
<div class="a" style="left:652.6px;top:320.4px;width:1.1px;height:66.1px;background:#3b3b3b"></div>
<div class="a" style="left:652.6px;top:408.5px;width:1.1px;height:154.2px;background:#3b3b3b"></div>
<div class="a" style="left:668.4px;top:452.5px;width:1.1px;height:22.0px;background:#3b3b3b"></div>
<div class="a" style="left:668.4px;top:518.6px;width:1.1px;height:22.0px;background:#3b3b3b"></div>
<div class="ln" style="left:506.9px;top:144.1px">219</div>
<div class="cl" style="left:637.4px;top:144.1px"><i class="f">.size</i><i class="p">(</i><i class="b">{</i>width<i class="o">: </i><i class="s">'90%'</i><i class="o">,</i><i class="b">}</i><i class="p">)</i></div>
<div class="ln" style="left:506.9px;top:166.2px">220</div>
<div class="cl" style="left:637.4px;top:166.2px"><i class="f">.padding</i><i class="p">(</i><i class="b">{</i></div>
<svg class="a" style="left:562.6px;top:171.9px;" width="9.7" height="11.0" viewBox="0 0 10 11.5"><path d="M1 1h8v6L5 10.4 1 7z" fill="#313335" stroke="#6a6d70" stroke-width="1.1"/><path d="M3 5h4" stroke="#6a6d70" stroke-width="1"/></svg>
<div class="ln" style="left:506.9px;top:188.2px">221</div>
<div class="cl" style="left:653.5px;top:188.2px">top<i class="o">:</i><i class="n">20</i><i class="o">,</i></div>
<div class="ln" style="left:506.9px;top:210.2px">222</div>
<div class="cl" style="left:653.5px;top:210.2px">left<i class="o">:</i><i class="n">10</i><i class="o">,</i></div>
<div class="ln" style="left:506.9px;top:232.3px">223</div>
<div class="cl" style="left:653.5px;top:232.3px">bottom<i class="o">:</i><i class="n">0</i></div>
<div class="ln" style="left:506.9px;top:254.3px">224</div>
<div class="cl" style="left:637.4px;top:254.3px"><i class="b">}</i><i class="p">)</i></div>
<svg class="a" style="left:562.6px;top:259.1px;" width="9.7" height="11.0" viewBox="0 0 10 11.5"><path d="M1 10.4h8v-6L5 1 1 4.4z" fill="#313335" stroke="#6a6d70" stroke-width="1.1"/><path d="M3 6.4h4" stroke="#6a6d70" stroke-width="1"/></svg>
<div class="ln" style="left:506.9px;top:276.3px">225</div>
<div class="cl" style="left:637.4px;top:276.3px"><i class="f">Flex</i><i class="p">(</i><i class="b">{</i> justifyContent<i class="o">: </i>FlexAlign.SpaceBetween <i class="b">}</i><i class="p">)</i> <i class="b">{</i></div>
<svg class="a" style="left:562.6px;top:282.1px;" width="9.7" height="11.0" viewBox="0 0 10 11.5"><path d="M1 1h8v6L5 10.4 1 7z" fill="#313335" stroke="#6a6d70" stroke-width="1.1"/><path d="M3 5h4" stroke="#6a6d70" stroke-width="1"/></svg>
<div class="ln" style="left:506.9px;top:298.4px">226</div>
<div class="cl" style="left:653.5px;top:298.4px"><i class="f">Text</i><i class="p">(</i><i class="s">'<span style="font-size:12.83px">不同的课程，记忆更牢固</span>'</i><i class="p">)</i><i class="f">.width</i><i class="p">(</i><i class="s">'70%'</i><i class="p">)</i></div>
<div class="ln" style="left:506.9px;top:320.4px">227</div>
<div class="cl" style="left:669.5px;top:320.4px"><i class="f">.fontSize</i><i class="p">(</i><i class="n">16</i><i class="p">)</i></div>
<div class="ln" style="left:506.9px;top:342.4px">228</div>
<div class="cl" style="left:669.5px;top:342.4px"><i class="f">.fontWeight</i><i class="p">(</i>FontWeight.Bold<i class="p">)</i></div>
<div class="ln" style="left:506.9px;top:364.4px">229</div>
<div class="cl" style="left:669.5px;top:364.4px"><i class="f">.fontColor</i><i class="p">(</i><i class="s">'#c4c2cf'</i><i class="p">)</i></div>
<div class="a" style="left:535.8px;top:370.4px;width:10.1px;height:10.1px;background:#c4c2cf"></div>
<div class="ln" style="left:506.9px;top:386.5px">230</div>
<div class="cl" style="left:653.5px;top:386.5px"><i class="f">Button</i><i class="p">(</i><i class="s">'<span style="font-size:12.83px">去闯关</span>'</i><i class="p">)</i><i class="f">.width</i><i class="p">(</i><i class="s">'30%'</i><i class="p">)</i></div>
<div class="ln" style="left:506.9px;top:408.5px">231</div>
<div class="cl" style="left:669.5px;top:408.5px"><i class="f">.backgroundColor</i><i class="p">(</i><i class="s">'#fecc5b'</i><i class="p">)</i></div>
<div class="a" style="left:535.8px;top:414.5px;width:10.1px;height:10.1px;background:#fecc5b"></div>
<div class="ln" style="left:506.9px;top:430.5px">232</div>
<div class="cl" style="left:669.5px;top:430.5px"><i class="f">.margin</i><i class="p">(</i><i class="b">{</i></div>
<svg class="a" style="left:562.6px;top:436.3px;" width="9.7" height="11.0" viewBox="0 0 10 11.5"><path d="M1 1h8v6L5 10.4 1 7z" fill="#313335" stroke="#6a6d70" stroke-width="1.1"/><path d="M3 5h4" stroke="#6a6d70" stroke-width="1"/></svg>
<div class="ln" style="left:506.9px;top:452.6px">233</div>
<div class="cl" style="left:685.5px;top:452.6px">top<i class="o">:</i><i class="n">-25</i><i class="o">,</i></div>
<div class="ln" style="left:506.9px;top:474.6px">234</div>
<div class="cl" style="left:669.5px;top:474.6px"><i class="b">}</i><i class="p">)</i></div>
<svg class="a" style="left:562.6px;top:479.5px;" width="9.7" height="11.0" viewBox="0 0 10 11.5"><path d="M1 10.4h8v-6L5 1 1 4.4z" fill="#313335" stroke="#6a6d70" stroke-width="1.1"/><path d="M3 6.4h4" stroke="#6a6d70" stroke-width="1"/></svg>
<div class="ln" style="left:506.9px;top:496.6px">235</div>
<div class="cl" style="left:669.5px;top:496.6px"><i class="f">.onClick</i><i class="p">(</i><i style="color:#5fb38a">()</i><i class="o">=></i><i class="b">{</i></div>
<svg class="a" style="left:562.6px;top:502.4px;" width="9.7" height="11.0" viewBox="0 0 10 11.5"><path d="M1 1h8v6L5 10.4 1 7z" fill="#313335" stroke="#6a6d70" stroke-width="1.1"/><path d="M3 5h4" stroke="#6a6d70" stroke-width="1"/></svg>
<div class="ln" style="left:506.9px;top:518.7px">236</div>
<div class="cl" style="left:685.5px;top:518.7px">router.<i class="f" style="text-decoration:line-through;color:#5a98a8">push</i><i class="p">(</i><i class="b">{</i> url<i class="o">: </i><i class="s">'pages/collect'</i> <i class="b">}</i><i class="p">)</i></div>
<div class="ln" style="left:506.9px;top:540.7px">237</div>
<div class="cl" style="left:669.5px;top:540.7px"><i class="b">}</i><i class="p">)</i></div>
<svg class="a" style="left:562.6px;top:545.5px;" width="9.7" height="11.0" viewBox="0 0 10 11.5"><path d="M1 10.4h8v-6L5 1 1 4.4z" fill="#313335" stroke="#6a6d70" stroke-width="1.1"/><path d="M3 6.4h4" stroke="#6a6d70" stroke-width="1"/></svg>
<div class="ln" style="left:506.9px;top:562.7px">238</div>
<div class="cl" style="left:637.4px;top:562.7px"><i class="b">}</i></div>
<svg class="a" style="left:562.6px;top:567.6px;" width="9.7" height="11.0" viewBox="0 0 10 11.5"><path d="M1 10.4h8v-6L5 1 1 4.4z" fill="#313335" stroke="#6a6d70" stroke-width="1.1"/><path d="M3 6.4h4" stroke="#6a6d70" stroke-width="1"/></svg>
<div class="ln" style="left:506.9px;top:584.7px">239</div>
<div class="cl" style="left:637.4px;top:584.7px"><i class="f">.size</i><i class="p">(</i><i class="b">{</i>width<i class="o">: </i><i class="s">'100%'</i><i class="o">, </i><i class="b">}</i><i class="p">)</i></div>
<div class="ln" style="left:506.9px;top:606.8px">240</div>
<div class="cl" style="left:637.4px;top:606.8px"><i class="f">.padding</i><i class="p">(</i></div>
<div class="ln" style="left:506.9px;top:628.8px">241</div>
<div class="cl" style="left:653.5px;top:628.8px"><i class="b">{</i> left<i class="o">: </i><i class="n">30</i><i class="o"> ,</i>top<i class="o">:</i><i class="n">10</i><i class="o">,</i>right<i class="o">:</i><i class="n">30</i><i class="o">,</i>bottom<i class="o">:</i><i class="n">20</i><i class="b">}</i><i class="o">,</i></div>
<div class="ln" style="left:506.9px;top:650.8px">242</div>
<div class="cl" style="left:637.4px;top:650.8px"><i class="p">)</i></div>
<div class="ln" style="left:506.9px;top:672.9px">243</div>
<div class="cl" style="left:637.4px;top:672.9px"><i class="f">.border</i><i class="p">(</i><i class="b">{</i></div>
<svg class="a" style="left:562.6px;top:678.6px;" width="9.7" height="11.0" viewBox="0 0 10 11.5"><path d="M1 1h8v6L5 10.4 1 7z" fill="#313335" stroke="#6a6d70" stroke-width="1.1"/><path d="M3 5h4" stroke="#6a6d70" stroke-width="1"/></svg>
<div class="ln" style="left:506.9px;top:694.9px">244</div>
<div class="cl" style="left:653.5px;top:694.9px">radius<i class="o">:</i><i class="b">{</i>bottomLeft<i class="o">: </i><i class="n">15</i><i class="o">, </i>bottomRight<i class="o">: </i><i class="n">15</i><i class="b">}</i></div>
<div class="ln" style="left:506.9px;top:716.9px">245</div>
<div class="cl" style="left:637.4px;top:716.9px"><i class="b">}</i><i class="p">)</i></div>
<svg class="a" style="left:562.6px;top:721.8px;" width="9.7" height="11.0" viewBox="0 0 10 11.5"><path d="M1 10.4h8v-6L5 1 1 4.4z" fill="#313335" stroke="#6a6d70" stroke-width="1.1"/><path d="M3 6.4h4" stroke="#6a6d70" stroke-width="1"/></svg>
<div class="ln" style="left:506.9px;top:739.0px">246</div>
<div class="cl" style="left:621.4px;top:739.0px"><i class="b">}</i><i class="f">.width</i><i class="p">(</i><i class="s">'90%'</i><i class="p">)</i></div>
<svg class="a" style="left:562.6px;top:743.8px;" width="9.7" height="11.0" viewBox="0 0 10 11.5"><path d="M1 10.4h8v-6L5 1 1 4.4z" fill="#313335" stroke="#6a6d70" stroke-width="1.1"/><path d="M3 6.4h4" stroke="#6a6d70" stroke-width="1"/></svg>
<div class="ln" style="left:506.9px;top:761.0px">247</div>
<div class="cl" style="left:621.4px;top:761.0px"><i class="f">.backgroundColor</i><i class="p">(</i><i class="s">'#fff'</i><i class="p">)</i></div>
<div class="a" style="left:535.8px;top:766.9px;width:10.1px;height:10.1px;background:#ffffff"></div>
<div class="ln" style="left:506.9px;top:783.0px">248</div>
<div class="cl" style="left:621.4px;top:783.0px"><i class="f">.borderRadius</i><i class="p">(</i><i class="n">15</i><i class="p">)</i></div>
<div class="t" style="left:511.3px;top:806.7px;height:20px;line-height:20px;font-size:12.93px;color:#b4b4b4">Index</div>
<div class="t" style="left:567.7px;top:806.7px;height:20px;line-height:20px;font-size:12.79px;color:#b4b4b4">build()</div>
<div class="t" style="left:628.0px;top:806.7px;height:20px;line-height:20px;font-size:12.87px;color:#b4b4b4">Column</div>
<div class="t" style="left:697.1px;top:806.7px;height:20px;line-height:20px;font-size:12.75px;color:#b4b4b4">Column</div>
<svg class="a" style="left:554.3px;top:810.6px;" width="5.3" height="10.1" viewBox="0 0 6 10"><path d="M1 1L4.5 5L1 9" fill="none" stroke="#7a7a7a" stroke-width="1.1"/></svg>
<svg class="a" style="left:613.7px;top:810.6px;" width="5.3" height="10.1" viewBox="0 0 6 10"><path d="M1 1L4.5 5L1 9" fill="none" stroke="#7a7a7a" stroke-width="1.1"/></svg>
<svg class="a" style="left:682.4px;top:810.6px;" width="5.3" height="10.1" viewBox="0 0 6 10"><path d="M1 1L4.5 5L1 9" fill="none" stroke="#7a7a7a" stroke-width="1.1"/></svg>
<div class="t" style="left:51.6px;top:830.4px;height:20px;line-height:20px;font-size:10.64px;color:#c0c0c0">版本控制</div>
<div class="t" style="left:130.6px;top:830.4px;height:20px;line-height:20px;font-size:11.36px;color:#c0c0c0">Run</div>
<div class="t" style="left:187.2px;top:830.4px;height:20px;line-height:20px;font-size:11.01px;color:#c0c0c0">TODO</div>
<div class="t" style="left:255.4px;top:830.4px;height:20px;line-height:20px;font-size:10.87px;color:#c0c0c0">日志</div>
<div class="t" style="left:312.0px;top:830.4px;height:20px;line-height:20px;font-size:11.20px;color:#c0c0c0">问题</div>
<div class="t" style="left:370.4px;top:830.4px;height:20px;line-height:20px;font-size:10.31px;color:#c0c0c0">终端</div>
<div class="t" style="left:426.8px;top:830.4px;height:20px;line-height:20px;font-size:10.87px;color:#c0c0c0">服务</div>
<div class="t" style="left:486.7px;top:830.4px;height:20px;line-height:20px;font-size:11.85px;color:#c0c0c0">Profiler</div>
<div class="t" style="left:563.3px;top:830.4px;height:20px;line-height:20px;font-size:11.76px;color:#c0c0c0">Code Linter</div>
<svg class="a" style="left:30.3px;top:832.7px;" width="14.0" height="14.0" viewBox="0 0 14 14"><circle cx="4" cy="3" r="1.8" fill="none" stroke="#afb1b3" stroke-width="1.3"/><circle cx="4" cy="11.4" r="1.8" fill="none" stroke="#afb1b3" stroke-width="1.3"/><circle cx="10.4" cy="5" r="1.8" fill="none" stroke="#afb1b3" stroke-width="1.3"/><path d="M4 5v4.6M10.4 7c0 2.4-6.4 1-6.4 3" stroke="#afb1b3" fill="none" stroke-width="1.3"/></svg>
<svg class="a" style="left:111.9px;top:832.7px;" width="14.0" height="14.0" viewBox="0 0 14 14"><path d="M2.6 1.6l9.2 5.4-9.2 5.4z" fill="#c8c8c8"/></svg>
<div class="a" style="left:122.0px;top:843.0px;width:3.9px;height:3.9px;background:#3cc24a;border-radius:50%"></div>
<svg class="a" style="left:169.4px;top:832.7px;" width="14.0" height="14.0" viewBox="0 0 14 14"><path d="M1 2.6h2M5 2.6h8M1 7h2M5 7h8M1 11.4h2M5 11.4h8" stroke="#afb1b3" stroke-width="1.6"/></svg>
<svg class="a" style="left:236.8px;top:832.7px;" width="14.0" height="14.0" viewBox="0 0 14 14"><rect x="1.2" y="1.2" width="11.6" height="11.6" fill="none" stroke="#c8c8c8" stroke-width="1.5"/><path d="M3.6 4.6h3M3.6 7h6.8M3.6 9.4h6.8" stroke="#c8c8c8" stroke-width="1.3"/><rect x="7.4" y="1.2" width="5.4" height="4" fill="#c8c8c8"/></svg>
<svg class="a" style="left:294.3px;top:832.7px;" width="14.0" height="14.0" viewBox="0 0 14 14"><circle cx="7" cy="7" r="5.8" fill="#c8c8c8"/><rect x="6.2" y="3.4" width="1.6" height="4.6" fill="#3c3f41"/><rect x="6.2" y="9.2" width="1.6" height="1.6" fill="#3c3f41"/></svg>
<svg class="a" style="left:351.5px;top:832.7px;" width="14.0" height="14.0" viewBox="0 0 14 14"><rect x="1.2" y="1.6" width="11.6" height="10.8" fill="none" stroke="#c8c8c8" stroke-width="1.5"/><path d="M3.6 4.6l2.8 2.2-2.8 2.2M7.6 9.6h3" stroke="#c8c8c8" stroke-width="1.3" fill="none"/></svg>
<svg class="a" style="left:409.0px;top:832.7px;" width="14.0" height="14.0" viewBox="0 0 14 14"><circle cx="7" cy="7" r="5.8" fill="#c8c8c8"/><path d="M5.2 4l4.8 3-4.8 3z" fill="#3c3f41"/></svg>
<svg class="a" style="left:467.4px;top:832.7px;" width="14.0" height="14.0" viewBox="0 0 14 14"><path d="M1.6 10.4A5.8 5.8 0 0 1 12.4 10.4" fill="none" stroke="#c8c8c8" stroke-width="1.5"/><path d="M7 10l3-4.4" stroke="#c8c8c8" stroke-width="1.5"/><circle cx="7" cy="10.4" r="1.4" fill="#c8c8c8"/></svg>
<svg class="a" style="left:545.5px;top:832.7px;" width="14.0" height="14.0" viewBox="0 0 14 14"><circle cx="6" cy="6" r="4.4" fill="none" stroke="#d0d0d0" stroke-width="1.8"/><path d="M9.4 9.4L13 13" stroke="#d0d0d0" stroke-width="2"/><path d="M4 6l1.6 1.6L8.4 4.6" stroke="#d0d0d0" stroke-width="1.2" fill="none"/></svg>
<svg class="a" style="left:4.4px;top:855.3px;" width="11.8" height="11.8" viewBox="0 0 12 12"><rect x="1" y="1" width="10" height="10" rx="1.5" fill="none" stroke="#afb1b3" stroke-width="1.3"/></svg>
<div class="t" style="left:27.4px;top:851.9px;height:20px;line-height:20px;font-size:12.85px;color:#c0c0c0">Emulator: Start P50 device success (47 minutes ago)</div>
<div class="a" style="left:1687.4px;top:854.9px;width:11.8px;height:11.8px;background:#3cb043;border-radius:50%"></div>
<div class="t" style="left:1713.3px;top:851.0px;height:20px;line-height:20px;font-size:12.21px;color:#b8b8b8">176:16</div>
<div class="t" style="left:1762.5px;top:851.0px;height:20px;line-height:20px;font-size:10.90px;color:#b8b8b8">LF</div>
<div class="t" style="left:1786.8px;top:851.0px;height:20px;line-height:20px;font-size:12.16px;color:#b8b8b8">UTF-8</div>
<div class="t" style="left:1832.2px;top:851.0px;height:20px;line-height:20px;font-size:12.61px;color:#b8b8b8">2 spaces</div>
<svg class="a" style="left:1892.4px;top:854.5px;" width="13.2" height="13.2" viewBox="0 0 14 14"><rect x="2" y="6" width="8" height="6" fill="#c8c8c8"/><path d="M8 6V3.4a2 2 0 0 1 4 0V5" fill="none" stroke="#c8c8c8" stroke-width="1.3"/></svg>
<div class="a" style="left:1913.9px;top:818.5px;width:2.2px;height:48.3px;background:linear-gradient(#5a6a7a,#e07a28 30%)"></div>
<div class="a" style="left:1911.7px;top:863.7px;width:6.6px;height:6.6px;background:#e0812c;border-radius:50%"></div>
<div class="a" style="left:1908.6px;top:120.1px;width:0;height:0;"><div class="vt" style="position:absolute;white-space:nowrap;transform:translate(-50%,-50%) rotate(90deg);line-height:14px;font-size:12.61px;color:#bbbbbb">Notifications</div></div>
<svg class="a" style="left:1902.4px;top:68.7px;" width="12.3" height="12.3" viewBox="0 0 12 12"><path d="M6 1.4a3.4 3.4 0 0 0-3.4 3.4v2.6L1.4 9h9.2L9.4 7.4V4.8A3.4 3.4 0 0 0 6 1.4zM4.8 9.8a1.2 1.2 0 0 0 2.4 0" fill="#afb1b3"/><circle cx="9.4" cy="2.6" r="2.2" fill="#3592c4"/></svg>
<svg class="a" style="left:1902.9px;top:176.9px;" width="12.7" height="11.0" viewBox="0 0 12 10"><path d="M0.6 5C3 0.6 9 0.6 11.4 5 9 9.4 3 9.4 0.6 5z" fill="none" stroke="#c8c8c8" stroke-width="1.2"/><circle cx="6" cy="5" r="1.8" fill="#c8c8c8"/></svg>
<div class="a" style="left:1907.9px;top:209.4px;width:0;height:0;"><div class="vt" style="position:absolute;white-space:nowrap;transform:translate(-50%,-50%) rotate(90deg);line-height:14px;font-size:11.63px;color:#bbbbbb">预览器</div></div>
<svg class="a" style="left:1827.0px;top:149.7px;" width="13.2" height="11.8" viewBox="0 0 12 12"><path d="M1.5 5l3 3.4L11 1.6" fill="none" stroke="#4fb04f" stroke-width="2"/><path d="M1 10.5h7" stroke="#4fb04f" stroke-width="1.2"/></svg>
<div class="t" style="left:1844.1px;top:145.6px;height:20px;line-height:20px;font-size:12px;color:#b8b8b8">1</div>
<svg class="a" style="left:1860.3px;top:151.4px;" width="11.4" height="7.5" viewBox="0 0 10 7"><path d="M1 5.4L5 1.4L9 5.4" fill="none" stroke="#b8b8b8" stroke-width="1.4"/></svg>
<svg class="a" style="left:1880.1px;top:151.8px;" width="11.4" height="7.5" viewBox="0 0 10 7"><path d="M1 1.4L5 5.4L9 1.4" fill="none" stroke="#b8b8b8" stroke-width="1.4"/></svg>
<div class="a" style="left:1894.3px;top:175.5px;width:4.4px;height:513.5px;background:#4b4d4f"></div>
<div class="a" style="left:1894.5px;top:173.3px;width:3.5px;height:2.6px;background:#d9a343"></div>
<div class="a" style="left:1895.0px;top:293.2px;width:3.1px;height:1.8px;background:#4fb04f"></div>
<div class="a" style="left:1844.1px;top:166.8px;width:49.6px;height:541.1px;background:#1f1f1f;border:1px solid #333;"></div>
<svg class="a" style="left:1850.7px;top:178.2px;" width="11.0" height="8.8" viewBox="0 0 10 8"><path d="M1 4h8" stroke="#a6a6a6" stroke-width="1.2"/></svg>
<svg class="a" style="left:1876.6px;top:177.7px;" width="10.1" height="10.1" viewBox="0 0 10 10"><path d="M1 1L9 9M9 1L1 9" stroke="#a6a6a6" stroke-width="1.2"/></svg>
<div class="a" style="left:1857.2px;top:197.5px;width:24.1px;height:1.1px;background:#4a4a4a"></div>
<svg class="a" style="left:1858.1px;top:208.5px;" width="21.9" height="21.9" viewBox="0 0 20 20"><path d="M3 5h14M3 10h14M3 15h14" stroke="#a6a6a6" stroke-width="1.5"/></svg>
<svg class="a" style="left:1858.1px;top:249.3px;" width="21.9" height="21.9" viewBox="0 0 20 20"><path d="M6.2 5.2A6.6 6.6 0 1 0 13.8 5.2" fill="none" stroke="#a6a6a6" stroke-width="1.5"/><path d="M10 2v7.6" stroke="#a6a6a6" stroke-width="1.5"/></svg>
<svg class="a" style="left:1858.1px;top:289.2px;" width="21.9" height="21.9" viewBox="0 0 20 20"><path d="M3 7.6h3.4L11 3.6v12.8L6.4 12.4H3z" fill="none" stroke="#a6a6a6" stroke-width="1.4"/><path d="M13 10h5M15.5 7.5v5" stroke="#a6a6a6" stroke-width="1.4"/></svg>
<svg class="a" style="left:1858.1px;top:330.0px;" width="21.9" height="21.9" viewBox="0 0 20 20"><path d="M3 7.6h3.4L11 3.6v12.8L6.4 12.4H3z" fill="none" stroke="#a6a6a6" stroke-width="1.4"/><path d="M13 10h5" stroke="#a6a6a6" stroke-width="1.4"/></svg>
<svg class="a" style="left:1858.1px;top:370.8px;" width="21.9" height="21.9" viewBox="0 0 20 20"><rect x="3" y="8" width="9" height="9" rx="1.5" fill="none" stroke="#a6a6a6" stroke-width="1.4"/><path d="M9 4.4h3.6a3 3 0 0 1 3 3v3.2" fill="none" stroke="#a6a6a6" stroke-width="1.4"/><path d="M10.6 2l-2.4 2.4 2.4 2.4" fill="none" stroke="#a6a6a6" stroke-width="1.4"/></svg>
<svg class="a" style="left:1858.1px;top:411.2px;" width="21.9" height="21.9" viewBox="0 0 20 20"><rect x="8" y="8" width="9" height="9" rx="1.5" fill="none" stroke="#a6a6a6" stroke-width="1.4"/><path d="M11 4.4H7.4a3 3 0 0 0-3 3v3.2" fill="none" stroke="#a6a6a6" stroke-width="1.4"/><path d="M9.4 2l2.4 2.4-2.4 2.4" fill="none" stroke="#a6a6a6" stroke-width="1.4"/></svg>
<div class="a" style="left:1857.2px;top:442.8px;width:24.1px;height:1.1px;background:#4a4a4a"></div>
<div class="a" style="left:1857.2px;top:481.9px;width:24.1px;height:1.1px;background:#3e3e3e"></div>
<svg class="a" style="left:1858.1px;top:451.4px;" width="21.9" height="21.9" viewBox="0 0 20 20"><path d="M6 2v12h12M2 6h12v12" fill="none" stroke="#a6a6a6" stroke-width="1.5"/></svg>
<svg class="a" style="left:1858.1px;top:492.2px;" width="21.9" height="21.9" viewBox="0 0 20 20"><rect x="3" y="6.4" width="12" height="7.2" rx="1.2" fill="none" stroke="#a6a6a6" stroke-width="1.4"/><rect x="4.6" y="8" width="6" height="4" fill="#a6a6a6"/><path d="M16.6 8.6v2.8" stroke="#a6a6a6" stroke-width="1.6"/></svg>
<svg class="a" style="left:1858.1px;top:531.0px;" width="21.9" height="21.9" viewBox="0 0 20 20"><path d="M10 18C6 12.6 4.4 10.4 4.4 7.8a5.6 5.6 0 0 1 11.2 0c0 2.6-1.6 4.8-5.600 10.200z" fill="none" stroke="#a6a6a6" stroke-width="1.4"/><circle cx="10" cy="7.8" r="2" fill="none" stroke="#a6a6a6" stroke-width="1.3"/></svg>
<svg class="a" style="left:1858.1px;top:572.1px;" width="21.9" height="21.9" viewBox="0 0 20 20"><path d="M2.4 8.4a10.6 10.6 0 0 1 15.2 0M5 11.4a7 7 0 0 1 10 0M7.6 14.2a3.4 3.400 0 0 1 4.8 0" fill="none" stroke="#a6a6a6" stroke-width="1.6"/><circle cx="10" cy="16.600" r="1.2" fill="#a6a6a6"/></svg>
<svg class="a" style="left:1858.1px;top:635.5px;" width="21.9" height="21.9" viewBox="0 0 20 20"><path d="M15.600 3.400v13.200L4.400 10z" fill="none" stroke="#a6a6a6" stroke-width="1.5"/></svg>
<svg class="a" style="left:1858.1px;top:676.3px;" width="21.9" height="21.9" viewBox="0 0 20 20"><circle cx="10" cy="10" r="6.8" fill="none" stroke="#a6a6a6" stroke-width="1.5"/></svg>
<div class="a" style="left:1816.9px;top:224.7px;width:4.2px;height:79.9px;background:linear-gradient(90deg,#5a524c,#b3a494 55%,#6a625a);border-radius:1.5px"></div>
<div class="a" style="left:1816.9px;top:333.5px;width:4.2px;height:35.5px;background:linear-gradient(90deg,#5a524c,#b3a494 55%,#6a625a);border-radius:1.5px"></div>
<div class="a" style="left:1511.6px;top:106.0px;width:306.5px;height:663.1px;background:#0c0b0b;border-radius:27px 27px 31px 31px;border:1.3px solid #7d7064;border-top:3px solid #a39584;border-bottom:5.2px solid #a0968c;box-shadow:0 1.5px 2.5px #0a0a0a"></div>
<div class="a" style="left:1515.4px;top:111.0px;width:298.6px;height:646.7px;border-radius:23px 23px 26px 26px;overflow:hidden;background:#f1f0fd">
<div class="a" style="left:-1.3px;top:-1.3px;width:302.8px;height:26.8px;background:#000"></div>
<div class="a" style="left:-1.3px;top:25.2px;width:302.8px;height:41.9px;background:#fff"></div>
<div class="t" style="left:18.2px;top:37.4px;height:20px;line-height:20px;font-size:14.32px;color:#111;font-weight:500">手语猜一猜</div>
<div class="a" style="left:-1.3px;top:66.9px;width:302.8px;height:237.9px;background:#938bf1"></div>
<div class="t" style="left:7.5px;top:71.6px;height:20px;line-height:20px;font-size:14.27px;color:#fff;font-weight:bold">每日挑战</div>
<svg class="a" style="left:226.0px;top:73.5px;" width="17.1" height="17.1" viewBox="0 0 14 14"><path d="M10.6 3.2A4.6 4.6 0 1 0 11.6 8" fill="none" stroke="#fff" stroke-width="1.1"/><path d="M9 0.6l2.4 2.8-3.4.6z" fill="#fff"/></svg>
<div class="t" style="left:246.6px;top:71.6px;height:20px;line-height:20px;font-size:14.63px;color:#fff;font-weight:bold">换一批</div>
<div class="a" style="left:7.5px;top:99.2px;width:283.9px;height:198.4px;background:#a7a2f0;border-radius:7px"></div>
<div class="t" style="left:13.8px;top:99.7px;height:20px;line-height:20px;font-size:8.66px;color:#fff;font-weight:bold">看这段视频tip，选出正确的答案</div>
<div class="t" style="left:231.3px;top:99.7px;height:20px;line-height:20px;font-size:8.49px;color:#fff;font-weight:bold">40%的人答错</div>
<div class="a" style="left:7.0px;top:122.9px;width:284.4px;height:129.5px;background:#000"></div>
<svg class="a" style="left:11.8px;top:126.4px" width="275.4" height="123.8" viewBox="696 108.2 125.5 56.4" preserveAspectRatio="none"><defs><linearGradient id="vbg" x1="0" y1="0" x2="1" y2="0"><stop offset="0" stop-color="#e4e0da"/><stop offset="0.3" stop-color="#efeee8"/><stop offset="0.42" stop-color="#e6e4dc"/><stop offset="0.62" stop-color="#ead6d8"/><stop offset="1" stop-color="#efdfe2"/></linearGradient><linearGradient id="skin" x1="0" y1="0" x2="1" y2="0"><stop offset="0" stop-color="#eab79e"/><stop offset="0.5" stop-color="#f3cdb8"/><stop offset="1" stop-color="#e9b9a2"/></linearGradient></defs><rect x="696" y="108.2" width="125.5" height="56.4" fill="url(#vbg)"/><path d="M745.8 108.2C745 116 746.4 128 748.6 135.6L754 136 766 134 772.4 132.6C773.4 124 772.4 114 770.4 108.200z" fill="#17110f"/><path d="M753.2 126h9.400l.8 9.800-5.400 4.600-5.600-4.600z" fill="#e6b097"/><path d="M749 110.200C749 108.200 767.800 108.200 768.600 110.200 770.200 117 769 124 765.400 128.600 762.400 132.400 755.600 132.600 752.600 128.800 749.400 124.600 748.200 117 749 110.200z" fill="url(#skin)"/><path d="M747 108.200h23.400c.6 3 .4 6-.2 8.200-2.200-3.800-5.600-6.200-9.800-6.600-5 .2-9.400 1-11.400 3.400-.8 1.400-1.200 3.200-1.400 4.600-.8-3.200-1-6.400-.6-9.600z" fill="#17110f"/><path d="M752.600 117.400q1.800-1 3.600 0M760.600 117.400q1.800-1 3.600 0" stroke="#3a2620" stroke-width="0.800" fill="none"/><path d="M757.600 119v4" stroke="#d9a58c" stroke-width="1.200"/><path d="M754.800 125.200q3.200 2.400 6.400 0q-3.200 .6-6.400 0z" fill="#c4453e" stroke="#c4453e" stroke-width="0.500"/><path d="M732 164.600C732.600 152 735 142 742 139.400L753.200 133.600 758 140.200 763.200 133.400 781 139.800C789 143 792 152 793.200 164.600z" fill="#e8271c"/><path d="M753.200 133.600l-3 3.400 6.400 7.600 1.400-4.400zM763.200 133.400l2.800 3.400-6.400 7.800-1.600-4.400z" fill="#cf1f16"/><path d="M742 164.600C748 156 756 149 764 144.400l9.600 4.600C770 155 762 160 757.600 164.600z" fill="#efc3ac"/><path d="M764.600 134.600c2.600-2.200 8.400-3.200 11-1.600 1.200.8 1.400 2 .8 3l1 .6c.8 3.400.6 8-1 10.600-2.600 3-8.400 3.400-11.800 1.200-3-2.200-3.600-6.400-2.400-9.600.4-1.800 1.200-3.200 2.400-4.200z" fill="#f1c8b2"/><path d="M769 136.400c2.400-1.200 5.200-1.600 7.400-.4M770.400 139.800h6.200" stroke="#d9a890" stroke-width="0.600" fill="none"/><rect x="696" y="150" width="125.500" height="14.600" fill="#ffffff" opacity="0.30"/><path d="M729 157.600H792" stroke="#ffffff" stroke-opacity="0.300" stroke-width="0.700"/><circle cx="702.100" cy="157.600" r="4.600" fill="none" stroke="#0c0c0c" stroke-width="0.900"/><path d="M700.600 155.200l4.200 2.400-4.200 2.400z" fill="#0c0c0c"/><circle cx="726.800" cy="157.600" r="2.500" fill="#fff"/><path d="M810.600 153.600l8.200 8M810.600 153.600h3M810.600 153.600v3M818.800 161.600h-3M818.800 161.600v-3" stroke="#0c0c0c" stroke-width="0.800" fill="none"/></svg>
<div class="t" style="left:41.7px;top:224.8px;height:20px;line-height:20px;font-size:10.78px;color:#111">00:00</div>
<div class="t" style="left:228.9px;top:224.8px;height:20px;line-height:20px;font-size:10.52px;color:#111">00:01</div>
<div class="a" style="left:14.5px;top:262.0px;width:120.2px;height:28.3px;background:#996bc9;border-radius:2px"></div>
<div class="a" style="left:162.8px;top:262.0px;width:120.5px;height:28.3px;background:#996bc9;border-radius:2px"></div>
<div class="t" style="left:68.7px;top:266.3px;height:20px;line-height:20px;font-size:10.8px;color:#fff;font-weight:bold">吃</div>
<div class="t" style="left:210.7px;top:266.3px;height:20px;line-height:20px;font-size:11.29px;color:#fff;font-weight:bold">厉害</div>
<div class="a" style="left:14.5px;top:319.5px;width:268.8px;height:66.7px;background:#fff;border-radius:9px"></div>
<div class="t" style="left:36.0px;top:331.7px;height:20px;line-height:20px;font-size:13.82px;color:#1a1a1a;font-weight:bold">课程</div>
<div class="t" style="left:36.0px;top:354.7px;height:20px;line-height:20px;font-size:11.58px;color:#c4c2cf">初级课程，易上手</div>
<div class="a" style="left:193.1px;top:339.9px;width:68.2px;height:29.0px;background:#fecc5b;border-radius:15px"></div>
<div class="t" style="left:216.4px;top:344.6px;height:20px;line-height:20px;font-size:11.09px;color:#fff;font-weight:bold">学习</div>
<div class="a" style="left:14.5px;top:400.2px;width:268.8px;height:67.1px;background:#fff;border-radius:9px"></div>
<div class="t" style="left:36.0px;top:413.9px;height:20px;line-height:20px;font-size:13.82px;color:#1a1a1a;font-weight:bold">测试</div>
<div class="t" style="left:36.0px;top:435.9px;height:20px;line-height:20px;font-size:11.62px;color:#c4c2cf">不同的课程，记忆更牢固</div>
<div class="a" style="left:193.1px;top:421.3px;width:68.2px;height:29.4px;background:#fecc5b;border-radius:15px"></div>
<div class="t" style="left:209.8px;top:426.2px;height:20px;line-height:20px;font-size:11.71px;color:#fff;font-weight:bold">去闯关</div>
<div class="a" style="left:14.5px;top:481.4px;width:268.8px;height:80.1px;background:#fff;border-radius:9px;overflow:hidden"><div style="position:absolute;left:0;right:0;bottom:0;height:35.1px;background:#938bf1"></div></div>
<div class="t" style="left:36.0px;top:495.6px;height:20px;line-height:20px;font-size:14.26px;color:#1a1a1a;font-weight:bold">学习记录</div>
<div class="t" style="left:179.9px;top:497.8px;height:20px;line-height:20px;font-size:11.94px;color:#222">2023年11月9日</div>
<div class="t" style="left:43.7px;top:533.7px;height:20px;line-height:20px;font-size:11.75px;color:#fff;font-weight:bold">已学0课程</div>
<div class="t" style="left:224.0px;top:533.7px;height:20px;line-height:20px;font-size:11.25px;color:#fff">0分钟</div>
</div>
<div class="a" style="left:1514.5px;top:501.8px;width:306.1px;height:85.4px;border:3px solid #f0261c;border-radius:1.5px"></div>
<svg class="a" style="left:0;top:0" width="1920" height="920" viewBox="0 0 875 419.27"><path d="M126.300 155.700L132.700 155.100 132.200 156.200 297.700 238.400 130.300 160 129.800 161.100z" fill="#e8251a"/><path d="M452.800 242L459.200 237.800 459.200 239.600 683 251.200 459.200 244.400 459.200 246.200z" fill="#e8251a"/></svg>
<div class="t" style="left:1188.0px;top:486.5px;height:24px;line-height:24px;font-size:21px;color:#d8261c;font-family:'Liberation Sans',sans-serif">1</div>
<div class="t" style="left:506.4px;top:403.0px;height:26px;line-height:26px;font-size:24px;color:#d8261c;font-family:'Liberation Sans',sans-serif">2</div>
<div class="a" style="left:0.0px;top:872.4px;width:1920.0px;height:47.8px;background:linear-gradient(90deg,#2a1a34 0%,#331a2c 16%,#481b1e 33%,#4a1c1b 45%,#3f1a17 66%,#3a1713 100%)"></div>
<svg class="a" style="left:16.7px;top:878.2px;" width="28.5" height="28.5" viewBox="0 0 26 26"><path d="M6 19h13a4.400 4.400 0 0 0 .6-8.800A6.400 6.400 0 0 0 7.400 9 5 5 0 0 0 6 19z" fill="#bcd6f7"/><path d="M5.600 19h13.600a4.400 4.400 0 0 0 3-1.600c-5 1-13 1-19 -.400a5 5 0 0 0 2.400 2z" fill="#8fb8ee"/><path d="M16.600 19.500l2.400 2.600a1.700 1.700 0 0 1-2.400 2.300 1.700 1.700 0 0 1 0-2.300z" fill="#2a7cf0" transform="rotate(20 17 22)"/><circle cx="19" cy="6" r="6.600" fill="#f7a1a9"/><text x="19" y="9" font-size="8.500" fill="#7a2030" text-anchor="middle" font-weight="bold" font-family="Liberation Sans,sans-serif">1</text></svg>
<div class="t" style="left:51.6px;top:879.9px;height:14px;line-height:14px;font-size:11.21px;color:#fff">20°C</div>
<div class="t" style="left:51.6px;top:895.7px;height:14px;line-height:14px;font-size:10.85px;color:#e8e8e8">小雨</div>
<svg class="a" style="left:683.3px;top:883.4px;" width="22.8" height="22.8" viewBox="0 0 20 20"><rect x="0" y="0" width="9.400" height="9.400" fill="#4cc2ff"/><rect x="10.600" y="0" width="9.400" height="9.400" fill="#4cc2ff"/><rect x="0" y="10.600" width="9.400" height="9.400" fill="#4cc2ff"/><rect x="10.600" y="10.600" width="9.400" height="9.400" fill="#4cc2ff"/></svg>
<div class="a" style="left:719.1px;top:879.5px;width:218.8px;height:32.5px;background:rgba(255,255,255,0.17);border-radius:16px"></div>
<svg class="a" style="left:731.6px;top:888.7px;" width="14.5" height="14.5" viewBox="0 0 14 14"><circle cx="5.600" cy="5.600" r="4" fill="none" stroke="#e8e8e8" stroke-width="1.600"/><path d="M8.600 8.600L12.600 12.600" stroke="#e8e8e8" stroke-width="1.800"/></svg>
<div class="t" style="left:756.2px;top:886.1px;height:20px;line-height:20px;font-size:14.59px;color:#d8d0d0">搜索</div>
<svg class="a" style="left:896.6px;top:885.2px;" width="24.1" height="21.1" viewBox="0 0 22 20"><rect x="1" y="5" width="20" height="13" rx="2" fill="#b8741c"/><rect x="1" y="5" width="20" height="6" rx="2" fill="#e6a53a"/><rect x="7.500" y="2" width="7" height="4" rx="1" fill="none" stroke="#7a4a10" stroke-width="1.400"/><rect x="9.400" y="9.600" width="3.200" height="3" fill="#f7e3a0"/></svg>
<svg class="a" style="left:951.4px;top:884.3px;" width="22.8" height="22.8" viewBox="0 0 20 20"><rect x="6" y="2" width="13" height="11" rx="1" fill="#f4f4f4"/><rect x="1" y="7" width="13" height="11" rx="1" fill="#8a8a8a"/></svg>
<svg class="a" style="left:995.3px;top:883.9px;" width="23.7" height="22.8" viewBox="0 0 22 20"><path d="M1 3.600h7l2 2.400h10v3H1z" fill="#e8a520"/><rect x="1" y="7" width="20" height="12" rx="1" fill="#f8cd48"/><rect x="1" y="15" width="20" height="4" fill="#3a8ad8"/></svg>
<svg class="a" style="left:1038.3px;top:883.9px;" width="23.7" height="23.7" viewBox="0 0 20 20"><circle cx="10" cy="10" r="9.400" fill="#1c86d8"/><path d="M2 12C2 4 16 2 18.600 9.600 19 13 14 13.400 12.400 12 13.400 9 10 6.600 6.600 8.400 3.600 10.400 4.400 16 9 18.600 4 18 2 15 2 12z" fill="#5ad4b0"/><path d="M6.600 8.400C10 6.600 13.400 9 12.400 12 11 14.600 9 16 9 18.600 4.400 16 3.600 10.400 6.600 8.400z" fill="#1a5fb8"/></svg>
<svg class="a" style="left:1081.3px;top:883.4px;" width="23.7" height="23.7" viewBox="0 0 20 20"><path d="M6 6V4.400a4 4 0 0 1 8 0V6" fill="none" stroke="#d8d8d8" stroke-width="1.400"/><rect x="1.400" y="5.600" width="17.200" height="13" rx="2" fill="#f4f4f4"/><rect x="5.400" y="8" width="4" height="4" fill="#f25022"/><rect x="10.400" y="8" width="4" height="4" fill="#7fba00"/><rect x="5.400" y="13" width="4" height="4" fill="#00a4ef"/><rect x="10.400" y="13" width="4" height="4" fill="#ffb900"/></svg>
<svg class="a" style="left:1126.5px;top:883.9px;" width="23.7" height="23.7" viewBox="0 0 20 20"><path d="M10 1.400L18.600 16.400A1.400 1.400 0 0 1 17.400 18.600H13.600L10 12.400 6.400 18.600H2.600A1.400 1.400 0 0 1 1.400 16.400z" fill="#2f9bf0"/><path d="M10 1.400l4.200 7.400L10 12.400 5.800 8.800z" fill="#6fd0ff"/></svg>
<div class="a" style="left:1134.0px;top:911.5px;width:8.8px;height:2.2px;background:#9a9a9a;border-radius:1px"></div>
<div class="a" style="left:1162.1px;top:875.5px;width:41.3px;height:41.7px;background:rgba(255,255,255,0.10);border-radius:4px"></div>
<svg class="a" style="left:1170.4px;top:883.4px;" width="24.1" height="24.1" viewBox="0 0 20 20"><path d="M10 1.400L18.600 10 10 18.600 1.400 10z" fill="#2f9bf0"/><path d="M10 6l4 4-4 4-4-4z" fill="#3d1a1c"/><path d="M10 1.400L18.600 10H14l-4-4-4 4H1.400z" fill="#6fd0ff"/></svg>
<div class="a" style="left:1174.8px;top:911.5px;width:15.8px;height:2.4px;background:#e8a0c8;border-radius:1px"></div>
<svg class="a" style="left:1214.8px;top:883.4px;" width="23.7" height="23.7" viewBox="0 0 20 20"><path d="M14.400 1L5.600 9.200 2.400 6.800 1 7.600v4.800l1.400.8 3.200-2.400L14.400 19l4.600-2V3zM14.400 6v8L8.800 10z" fill="#2a9df4"/></svg>
<div class="a" style="left:1222.7px;top:911.5px;width:8.8px;height:2.2px;background:#9a9a9a;border-radius:1px"></div>
<svg class="a" style="left:1701.4px;top:891.8px;" width="13.2" height="7.9" viewBox="0 0 10 6"><path d="M1 5L5 1.400L9 5" fill="none" stroke="#f0f0f0" stroke-width="1.300"/></svg>
<div class="t" style="left:1731.7px;top:885.7px;height:20px;line-height:20px;font-size:13px;color:#f4f4f4">英</div>
<svg class="a" style="left:1762.9px;top:885.2px;" width="20.6" height="20.6" viewBox="0 0 20 20"><rect x="2" y="3" width="13" height="10" rx="1" fill="none" stroke="#f0f0f0" stroke-width="1.400"/><path d="M6 16.600h6" stroke="#f0f0f0" stroke-width="1.400"/><rect x="11" y="8" width="6" height="7" fill="#3d1a1c"/><rect x="12" y="7" width="5" height="7" rx="1" fill="none" stroke="#f0f0f0" stroke-width="1.200"/></svg>
<svg class="a" style="left:1787.0px;top:885.6px;" width="20.6" height="20.6" viewBox="0 0 20 20"><path d="M2 7.600h3.400L10 3.600v12.800L5.400 12.400H2z" fill="none" stroke="#f0f0f0" stroke-width="1.400"/><path d="M12.600 7a4 4 0 0 1 0 6M15 4.600a7.400 7.400 0 0 1 0 10.800" fill="none" stroke="#f0f0f0" stroke-width="1.300"/></svg>
<div class="t" style="left:1788.3px;top:880.1px;width:88.4px;height:14px;line-height:14px;text-align:right;font-size:12px;color:#fff">10:13</div>
<div class="t" style="left:1788.3px;top:895.3px;width:88.4px;height:14px;line-height:14px;text-align:right;font-size:12px;color:#fff">2023/11/9</div>
<div class="a" style="left:1883.6px;top:886.9px;width:15.8px;height:15.8px;background:#e8a6e0;border-radius:50%;color:#3a1a30;font-size:9px;text-align:center;line-height:15.8px">1</div>
</div></body></html>
